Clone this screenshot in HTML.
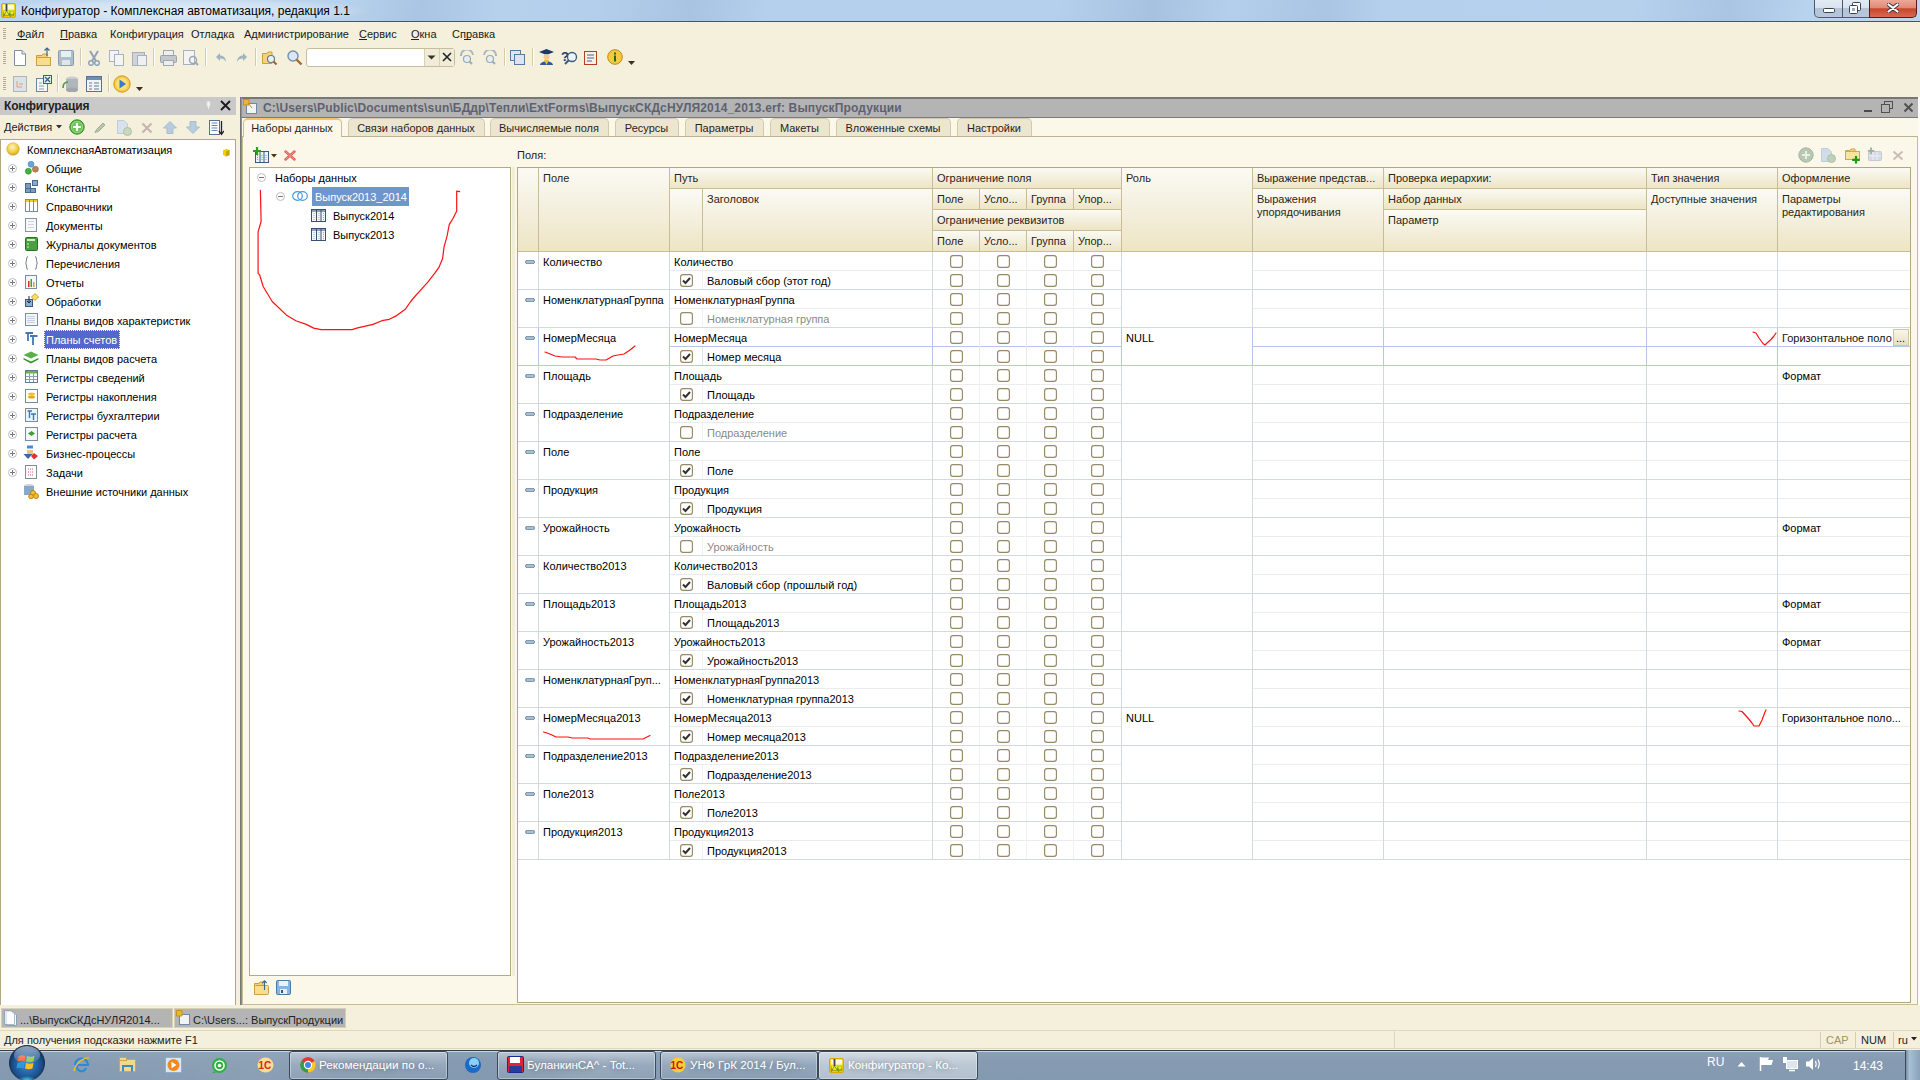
<!DOCTYPE html><html><head><meta charset="utf-8"><style>
html,body{margin:0;padding:0;width:1920px;height:1080px;overflow:hidden;background:#f4f0dc;font-family:"Liberation Sans", sans-serif;font-size:11px}
div{position:absolute;white-space:nowrap;box-sizing:border-box}
svg{position:absolute}
</style></head><body>
<div style="left:0px;top:0px;width:1920px;height:21px;background:linear-gradient(100deg,#bcd5ee 0%,#b8d2ec 18%,#a9c5e3 22%,#b6d1ec 26%,#b4cfeb 31%,#a8c4e2 36%,#b5d0ec 40%,#b4d0ec 55%,#a6c2e0 60%,#b3cfeb 64%,#a9c5e3 69%,#b4d0ec 72%,#b5d1ec 85%,#a9c5e4 90%,#b8d3ed 94%,#bcd6ee 100%)"></div>
<div style="left:0;top:0;width:380px;height:21px;background:radial-gradient(ellipse 190px 14px at 180px 11px,rgba(235,243,250,0.85),rgba(235,243,250,0.4) 70%,rgba(235,243,250,0) 100%)"></div>
<div style="left:0px;top:21px;width:1920px;height:1px;background:#4a5562"></div>
<svg style="position:absolute;left:1px;top:3px" width="15" height="15" viewBox="0 0 15 15"><defs><linearGradient id="ait" x1="0" y1="0" x2="0" y2="1"><stop offset="0" stop-color="#fffef4"/><stop offset="0.42" stop-color="#fff6c0"/><stop offset="0.55" stop-color="#c8d830"/><stop offset="1" stop-color="#5a9a10"/></linearGradient></defs><rect x="0.5" y="0.5" width="14" height="14" rx="1.5" fill="#f2c800" stroke="#dca800"/><rect x="1.8" y="1.5" width="11.4" height="11" fill="url(#ait)"/><circle cx="5.5" cy="9.5" r="2.6" fill="#fff030" opacity="0.85"/><circle cx="11" cy="10" r="1.4" fill="#fff030" opacity="0.85"/><path d="M5.5 1 V8" stroke="#40404e" stroke-width="1.8"/><path d="M5.5 8 L2 14 M5.5 8 L10 14" stroke="#607040" stroke-width="0.7"/></svg>
<div style="left:21px;top:3.84px;font-size:12px;line-height:14px;color:#000;">Конфигуратор - Комплексная автоматизация, редакция 1.1</div>
<div style="left:1814px;top:0;width:56px;height:18px;border:1px solid #4f5a66;border-top:none;border-radius:0 0 0 5px;background:linear-gradient(180deg,#e3ebf4 0%,#d9e3ee 45%,#b3c4d8 50%,#b8c8dc 100%)"></div>
<div style="left:1842px;top:0px;width:1px;height:18px;background:#4f5a66"></div>
<div style="left:1869px;top:0;width:48px;height:18px;border:1px solid #5a1c10;border-top:none;border-radius:0 0 5px 0;background:linear-gradient(180deg,#eea898 0%,#e08a78 45%,#c8452c 52%,#d86a50 100%)"></div>
<svg style="position:absolute;left:1823px;top:8px" width="12" height="5" viewBox="0 0 12 5"><rect x="0.5" y="0.5" width="11" height="4" rx="1" fill="#fff" stroke="#3a4450"/></svg>
<svg style="position:absolute;left:1849px;top:2px" width="12" height="12" viewBox="0 0 12 12"><rect x="3.5" y="0.5" width="8" height="8" rx="1" fill="#fff" stroke="#3a4450"/><rect x="0.5" y="3.5" width="8" height="8" rx="1" fill="#fff" stroke="#3a4450"/><rect x="3" y="6" width="3" height="3" fill="#9aaabb"/></svg>
<svg style="position:absolute;left:1887px;top:3px" width="12" height="10" viewBox="0 0 12 10"><path d="M1.5 1.5 L10.5 8.5 M10.5 1.5 L1.5 8.5" stroke="#3a3a3a" stroke-width="4" stroke-linecap="round"/><path d="M1.5 1.5 L10.5 8.5 M10.5 1.5 L1.5 8.5" stroke="#fff" stroke-width="2.2" stroke-linecap="round"/></svg>
<div style="left:3px;top:28px;width:3px;height:1px;background:#b4ac94"></div>
<div style="left:3px;top:30px;width:3px;height:1px;background:#b4ac94"></div>
<div style="left:3px;top:32px;width:3px;height:1px;background:#b4ac94"></div>
<div style="left:3px;top:34px;width:3px;height:1px;background:#b4ac94"></div>
<div style="left:3px;top:36px;width:3px;height:1px;background:#b4ac94"></div>
<div style="left:3px;top:38px;width:3px;height:1px;background:#b4ac94"></div>
<div style="left:17px;top:27.69px;font-size:11px;line-height:13px;color:#1a1a1a;">Файл</div>
<div style="left:60px;top:27.69px;font-size:11px;line-height:13px;color:#1a1a1a;">Правка</div>
<div style="left:110px;top:27.69px;font-size:11px;line-height:13px;color:#1a1a1a;">Конфигурация</div>
<div style="left:191px;top:27.69px;font-size:11px;line-height:13px;color:#1a1a1a;">Отладка</div>
<div style="left:244px;top:27.69px;font-size:11px;line-height:13px;color:#1a1a1a;">Администрирование</div>
<div style="left:359px;top:27.69px;font-size:11px;line-height:13px;color:#1a1a1a;">Сервис</div>
<div style="left:411px;top:27.69px;font-size:11px;line-height:13px;color:#1a1a1a;">Окна</div>
<div style="left:452px;top:27.69px;font-size:11px;line-height:13px;color:#1a1a1a;">Справка</div>
<div style="left:16px;top:39px;width:11px;height:1px;background:#222"></div>
<div style="left:60px;top:39px;width:8px;height:1px;background:#222"></div>
<div style="left:359px;top:39px;width:8px;height:1px;background:#222"></div>
<div style="left:411px;top:39px;width:8px;height:1px;background:#222"></div>
<div style="left:464px;top:39px;width:7px;height:1px;background:#222"></div>
<div style="left:3px;top:51px;width:3px;height:1px;background:#b4ac94"></div>
<div style="left:3px;top:53px;width:3px;height:1px;background:#b4ac94"></div>
<div style="left:3px;top:55px;width:3px;height:1px;background:#b4ac94"></div>
<div style="left:3px;top:57px;width:3px;height:1px;background:#b4ac94"></div>
<div style="left:3px;top:59px;width:3px;height:1px;background:#b4ac94"></div>
<div style="left:3px;top:61px;width:3px;height:1px;background:#b4ac94"></div>
<div style="left:3px;top:63px;width:3px;height:1px;background:#b4ac94"></div>
<div style="left:3px;top:77px;width:3px;height:1px;background:#b4ac94"></div>
<div style="left:3px;top:79px;width:3px;height:1px;background:#b4ac94"></div>
<div style="left:3px;top:81px;width:3px;height:1px;background:#b4ac94"></div>
<div style="left:3px;top:83px;width:3px;height:1px;background:#b4ac94"></div>
<div style="left:3px;top:85px;width:3px;height:1px;background:#b4ac94"></div>
<div style="left:3px;top:87px;width:3px;height:1px;background:#b4ac94"></div>
<div style="left:3px;top:89px;width:3px;height:1px;background:#b4ac94"></div>
<svg style="position:absolute;left:13px;top:50px" width="14" height="16" viewBox="0 0 14 16"><path d="M1.5 0.5 H9 L12.5 4 V15.5 H1.5 Z" fill="#fff" stroke="#7d8fa5"/><path d="M9 0.5 V4 H12.5" fill="#dfe8f2" stroke="#7d8fa5"/></svg>
<svg style="position:absolute;left:36px;top:50px" width="16" height="16" viewBox="0 0 16 16"><path d="M0.5 5.5 H6 L7 4 H11 V15.5 H0.5 Z" fill="#f3d27a" stroke="#c9a040"/><rect x="0.5" y="7.5" width="14" height="8" fill="#f7de8e" stroke="#c9a040"/></svg>
<svg style="position:absolute;left:44px;top:47px" width="6" height="10" viewBox="0 0 6 10"><path d="M3 9 V1 M0.5 3.5 L3 1 L5.5 3.5" stroke="#3b6a8c" stroke-width="1.2" fill="none"/></svg>
<svg style="position:absolute;left:58px;top:50px" width="16" height="16" viewBox="0 0 16 16"><rect x="0.5" y="0.5" width="15" height="15" rx="1" fill="#aebccc" stroke="#8c9cb0"/><rect x="3" y="1" width="10" height="6" fill="#e6eef6"/><rect x="4" y="10" width="8" height="5" fill="#dde6ee"/></svg>
<div style="left:80px;top:48px;width:1px;height:18px;background:#d4ccb0"></div>
<div style="left:81px;top:48px;width:1px;height:18px;background:#fff"></div>
<svg style="position:absolute;left:88px;top:50px" width="12" height="16" viewBox="0 0 12 16"><path d="M2 1 L8 11 M10 1 L4 11" stroke="#8ea2b8" stroke-width="2"/><circle cx="3" cy="13" r="2.3" fill="none" stroke="#8ea2b8" stroke-width="1.5"/><circle cx="9" cy="13" r="2.3" fill="none" stroke="#8ea2b8" stroke-width="1.5"/></svg>
<svg style="position:absolute;left:109px;top:50px" width="16" height="16" viewBox="0 0 16 16"><rect x="0.5" y="0.5" width="9" height="11" fill="#f4f4f4" stroke="#a6b2c0"/><rect x="5.5" y="4.5" width="9" height="11" fill="#f4f4f4" stroke="#a6b2c0"/></svg>
<svg style="position:absolute;left:132px;top:50px" width="16" height="16" viewBox="0 0 16 16"><rect x="0.5" y="2.5" width="12" height="13" fill="#d0d4d8" stroke="#a6aeb8"/><rect x="5.5" y="5.5" width="9" height="10" fill="#eef0f2" stroke="#a6b2c0"/></svg>
<div style="left:153px;top:48px;width:1px;height:18px;background:#d4ccb0"></div>
<div style="left:154px;top:48px;width:1px;height:18px;background:#fff"></div>
<svg style="position:absolute;left:160px;top:50px" width="17" height="16" viewBox="0 0 17 16"><rect x="3.5" y="0.5" width="10" height="5" fill="#eee" stroke="#a0a8b0"/><rect x="0.5" y="5.5" width="16" height="7" rx="1" fill="#c4c8cc" stroke="#9aa2aa"/><rect x="3.5" y="10.5" width="10" height="5" fill="#eee" stroke="#a0a8b0"/></svg>
<svg style="position:absolute;left:183px;top:50px" width="16" height="16" viewBox="0 0 16 16"><rect x="0.5" y="0.5" width="11" height="14" fill="#f4f4f4" stroke="#a6b2c0"/><circle cx="10" cy="10" r="3.5" fill="none" stroke="#9aa6b4" stroke-width="1.5"/><path d="M12.5 12.5 L15 15" stroke="#9aa6b4" stroke-width="2"/></svg>
<div style="left:205px;top:48px;width:1px;height:18px;background:#d4ccb0"></div>
<div style="left:206px;top:48px;width:1px;height:18px;background:#fff"></div>
<svg style="position:absolute;left:215px;top:52px" width="12" height="11" viewBox="0 0 12 11"><path d="M5 1 L1 5 L5 9 V6.5 C8 6.5 10 7.5 11 10 C11 6 8.5 3.5 5 3.5 Z" fill="#9fb3c2"/></svg>
<svg style="position:absolute;left:236px;top:52px" width="12" height="11" viewBox="0 0 12 11"><path d="M7 1 L11 5 L7 9 V6.5 C4 6.5 2 7.5 1 10 C1 6 3.5 3.5 7 3.5 Z" fill="#9fb3c2"/></svg>
<div style="left:255px;top:48px;width:1px;height:18px;background:#d4ccb0"></div>
<div style="left:256px;top:48px;width:1px;height:18px;background:#fff"></div>
<svg style="position:absolute;left:262px;top:50px" width="16" height="16" viewBox="0 0 16 16"><path d="M0.5 3.5 H5 L6 2 H10 V13.5 H0.5 Z" fill="#f3d27a" stroke="#c9a040"/><circle cx="9" cy="9" r="3.5" fill="#e8f0f8" stroke="#6a7a8a" stroke-width="1.2"/><path d="M11.5 11.5 L14.5 14.5" stroke="#b05a20" stroke-width="2"/></svg>
<svg style="position:absolute;left:287px;top:50px" width="16" height="16" viewBox="0 0 16 16"><circle cx="6" cy="6" r="5" fill="#d8e8f6" stroke="#7890a8" stroke-width="1.4"/><path d="M9.5 9.5 L14.5 14.5" stroke="#a86a30" stroke-width="2.4"/></svg>
<div style="left:306px;top:48px;width:149px;height:19px;border:1px solid #c7bd9c;border-radius:3px;background:#fff"></div>
<div style="left:424px;top:49px;width:1px;height:17px;background:#d8d0b4"></div>
<div style="left:425px;top:49px;width:14px;height:17px;background:#f0ecd8"></div>
<div style="left:439px;top:49px;width:1px;height:17px;background:#d8d0b4"></div>
<div style="left:440px;top:49px;width:14px;height:17px;background:#f0ecd8"></div>
<svg style="position:absolute;left:427px;top:55px" width="9" height="5" viewBox="0 0 9 5"><path d="M0.5 0.5 H8.5 L4.5 4.5 Z" fill="#3c3020"/></svg>
<svg style="position:absolute;left:442px;top:52px" width="10" height="10" viewBox="0 0 10 10"><path d="M1 1 L9 9 M9 1 L1 9" stroke="#222" stroke-width="1.6"/></svg>
<svg style="position:absolute;left:459px;top:50px" width="16" height="16" viewBox="0 0 16 16"><path d="M2 6 A6 6 0 0 1 14 5" fill="none" stroke="#aab6c2" stroke-width="2"/><circle cx="8" cy="9" r="3.5" fill="#e6eef4" stroke="#9aa8b6" stroke-width="1.2"/><path d="M10.5 11.5 L13 14" stroke="#a0aab4" stroke-width="2"/></svg>
<svg style="position:absolute;left:482px;top:50px" width="16" height="16" viewBox="0 0 16 16"><path d="M2 5 A6 6 0 0 1 14 6" fill="none" stroke="#aab6c2" stroke-width="2"/><circle cx="8" cy="9" r="3.5" fill="#e6eef4" stroke="#9aa8b6" stroke-width="1.2"/><path d="M10.5 11.5 L13 14" stroke="#a0aab4" stroke-width="2"/></svg>
<div style="left:504px;top:48px;width:1px;height:18px;background:#d4ccb0"></div>
<div style="left:505px;top:48px;width:1px;height:18px;background:#fff"></div>
<svg style="position:absolute;left:510px;top:50px" width="16" height="16" viewBox="0 0 16 16"><rect x="0.5" y="0.5" width="10" height="10" fill="#dbe6f2" stroke="#5a7a9a"/><rect x="4.5" y="4.5" width="10" height="10" fill="#dbe6f2" stroke="#5a7a9a"/></svg>
<div style="left:532px;top:48px;width:1px;height:18px;background:#d4ccb0"></div>
<div style="left:533px;top:48px;width:1px;height:18px;background:#fff"></div>
<svg style="position:absolute;left:538px;top:48px" width="17" height="18" viewBox="0 0 17 18"><path d="M1 4 L8.5 1 L16 4 L8.5 7 Z" fill="#1a3a6a"/><circle cx="8.5" cy="9" r="3" fill="#f2c89a"/><path d="M2 17 C3 12 14 12 15 17 Z" fill="#2a5a9a"/><path d="M6 12 L8.5 17 L11 12" fill="#e8c040"/></svg>
<svg style="position:absolute;left:561px;top:49px" width="17" height="17" viewBox="0 0 17 17"><text x="0" y="12" font-size="13" font-family="Liberation Sans" font-weight="bold" fill="#1a3a6a">?</text><circle cx="11" cy="8" r="4.5" fill="#eaf4fc" stroke="#3a5a7a" stroke-width="1.3"/><path d="M8 11 L4 15" stroke="#3a5a7a" stroke-width="2"/></svg>
<svg style="position:absolute;left:584px;top:50px" width="15" height="16" viewBox="0 0 15 16"><rect x="0.5" y="1.5" width="12" height="13" fill="#f8f0e0" stroke="#b04020"/><path d="M3 5 H10 M3 8 H10 M3 11 H8" stroke="#3a6aa0"/></svg>
<svg style="position:absolute;left:607px;top:49px" width="16" height="16" viewBox="0 0 16 16"><circle cx="8" cy="8" r="7.3" fill="#f5c842" stroke="#c08818"/><rect x="7" y="6.5" width="2" height="6" fill="#2a6a10"/><rect x="7" y="3.5" width="2" height="2" fill="#2a6a10"/></svg>
<svg style="position:absolute;left:628px;top:61px" width="8" height="5" viewBox="0 0 8 5"><path d="M0 0 H7 L3.5 4 Z" fill="#3c3020"/></svg>
<svg style="position:absolute;left:13px;top:76px" width="15" height="16" viewBox="0 0 15 16"><rect x="0.5" y="0.5" width="13" height="15" fill="#dde2e6" stroke="#aab4be"/><path d="M4 5 V11 H9 M6 8 H10" stroke="#d8a080" fill="none"/></svg>
<svg style="position:absolute;left:36px;top:75px" width="16" height="17" viewBox="0 0 16 17"><rect x="0.5" y="3.5" width="11" height="13" fill="#f4f6f8" stroke="#6a86a6"/><rect x="7.5" y="0.5" width="8" height="8" fill="#e8f0f8" stroke="#3a5a8a"/><path d="M9 2 L14 7 M14 2 L9 7" stroke="#3a5a8a" stroke-width="1.3"/><path d="M3 8 H6 M3 11 H8 M3 14 H8" stroke="#8aa0b8"/></svg>
<div style="left:57px;top:74px;width:1px;height:18px;background:#d4ccb0"></div>
<div style="left:58px;top:74px;width:1px;height:18px;background:#fff"></div>
<svg style="position:absolute;left:62px;top:76px" width="17" height="16" viewBox="0 0 17 16"><ellipse cx="10" cy="3" rx="6" ry="2.5" fill="#c8ccd0"/><rect x="4" y="3" width="12" height="11" fill="#b0b6bc"/><ellipse cx="10" cy="14" rx="6" ry="2.5" fill="#a0a6ac"/><path d="M1 12 C1 7 4 6 6 6" stroke="#4a9a5a" stroke-width="1.6" fill="none"/></svg>
<svg style="position:absolute;left:86px;top:76px" width="16" height="16" viewBox="0 0 16 16"><rect x="0.5" y="0.5" width="15" height="15" fill="#f0f4f8" stroke="#5a7090"/><rect x="1" y="1" width="14" height="3" fill="#7090b0"/><path d="M3 7 H6 M3 10 H6 M3 13 H6 M8 7 H13 M8 10 H13 M8 13 H13" stroke="#6a7a8a"/></svg>
<div style="left:108px;top:74px;width:1px;height:18px;background:#d4ccb0"></div>
<div style="left:109px;top:74px;width:1px;height:18px;background:#fff"></div>
<svg style="position:absolute;left:113px;top:75px" width="18" height="18" viewBox="0 0 18 18"><circle cx="9" cy="9" r="8.2" fill="#f7c94a" stroke="#d29a1a"/><circle cx="9" cy="9" r="6" fill="#fbe07a"/><path d="M6.5 4.5 L13 9 L6.5 13.5 Z" fill="#3a7ad0"/></svg>
<svg style="position:absolute;left:136px;top:87px" width="8" height="5" viewBox="0 0 8 5"><path d="M0 0 H7 L3.5 4 Z" fill="#3c3020"/></svg>
<div style="left:0px;top:97px;width:236px;height:18px;background:#c9c9c9"></div>
<div style="left:4px;top:98.84px;font-size:12px;line-height:14px;color:#222;font-weight:bold;letter-spacing:-0.15px">Конфигурация</div>
<svg style="position:absolute;left:206px;top:101px" width="6" height="9" viewBox="0 0 6 9"><rect x="1" y="0.5" width="3" height="5" rx="1" fill="#f4f4f4" stroke="#e0e0e0"/><rect x="2" y="5" width="1" height="3" fill="#eee"/></svg>
<svg style="position:absolute;left:220px;top:100px" width="11" height="11" viewBox="0 0 11 11"><path d="M1 1 L10 10 M10 1 L1 10" stroke="#1a1a1a" stroke-width="1.8"/></svg>
<div style="left:4px;top:120.69px;font-size:11px;line-height:13px;color:#1a1a1a;">Действия</div>
<svg style="position:absolute;left:56px;top:125px" width="6" height="4" viewBox="0 0 6 4"><path d="M0 0 H6 L3 3.5 Z" fill="#333"/></svg>
<svg style="position:absolute;left:69px;top:119px" width="16" height="16" viewBox="0 0 16 16"><circle cx="8" cy="8" r="7.2" fill="#5cb848" stroke="#3a8a30"/><circle cx="8" cy="8" r="5.6" fill="#6ac456" stroke="#a8e098" stroke-width="0.8"/><path d="M8 4 V12 M4 8 H12" stroke="#fff" stroke-width="2.2"/></svg>
<svg style="position:absolute;left:94px;top:121px" width="13" height="13" viewBox="0 0 13 13"><path d="M2 11 L1 12 L2.5 8.5 L9 2 L11 4 L4.5 10.5 Z" fill="#b8c6a8" stroke="#a0b090"/></svg>
<svg style="position:absolute;left:117px;top:120px" width="15" height="16" viewBox="0 0 15 16"><path d="M0.5 0.5 H7 L10.5 4 V13.5 H0.5 Z" fill="#d8e2ec" stroke="#c0ccd8"/><circle cx="10.5" cy="11.5" r="4" fill="#c8d8c0" stroke="#b0c0a8"/></svg>
<svg style="position:absolute;left:141px;top:122px" width="12" height="12" viewBox="0 0 12 12"><path d="M1.5 1.5 L10.5 10.5 M10.5 1.5 L1.5 10.5" stroke="#c8b4b0" stroke-width="2.2"/></svg>
<svg style="position:absolute;left:163px;top:121px" width="14" height="13" viewBox="0 0 14 13"><path d="M7 0.5 L13.5 7 H10 V12.5 H4 V7 H0.5 Z" fill="#b8cce0" stroke="#a8bcd0"/></svg>
<svg style="position:absolute;left:186px;top:121px" width="14" height="13" viewBox="0 0 14 13"><path d="M7 12.5 L13.5 6 H10 V0.5 H4 V6 H0.5 Z" fill="#b8cce0" stroke="#a8bcd0"/></svg>
<svg style="position:absolute;left:209px;top:120px" width="15" height="16" viewBox="0 0 15 16"><rect x="0.5" y="0.5" width="10" height="14" fill="#fff" stroke="#5a7090"/><path d="M2.5 3 H8.5 M2.5 5.5 H8.5 M2.5 8 H8.5 M2.5 10.5 H8.5" stroke="#6a8ab0"/><path d="M12.5 1 V13 M10 11 L12.5 14.5 L15 11" stroke="#1a2a3a" stroke-width="1.3" fill="none"/></svg>
<div style="left:0;top:139px;width:236px;height:868px;background:#fff;border:1px solid #b2a880;border-left-color:#b2a880"></div>
<svg style="position:absolute;left:6px;top:142px" width="14" height="14" viewBox="0 0 14 14"><defs><radialGradient id="gy" cx="0.45" cy="0.35" r="0.7"><stop offset="0" stop-color="#fff6c0"/><stop offset="0.6" stop-color="#f0cc40"/><stop offset="1" stop-color="#c89a18"/></radialGradient></defs><circle cx="7" cy="7" r="6.3" fill="url(#gy)" stroke="#d8b040" stroke-width="0.6"/></svg>
<div style="left:27px;top:143.69px;font-size:11px;line-height:13px;color:#000;">КомплекснаяАвтоматизация</div>
<svg style="position:absolute;left:222px;top:148px" width="8" height="9" viewBox="0 0 8 9"><path d="M1 2.5 L4.5 0.8 L7.5 2 V7 L4 8.5 L1 7 Z" fill="#f0d000"/><path d="M4 3.5 V8.5 L7.5 7 V2 Z" fill="#c8a800"/></svg>
<svg style="position:absolute;left:8.0px;top:163.5px" width="9" height="9" viewBox="0 0 9 9"><circle cx="4.5" cy="4.5" r="4" fill="#fff" stroke="#b4b4b4" stroke-width="0.9"/><path d="M2 4.5 H7 M4.5 2 V7" stroke="#777" stroke-width="1"/></svg>
<svg style="position:absolute;left:25px;top:161px" width="14" height="14" viewBox="0 0 14 14"><circle cx="6" cy="3.2" r="3" fill="#6aa6d8" stroke="#4a86b8" stroke-width="0.6"/><circle cx="3.4" cy="10.2" r="3" fill="#44b040" stroke="#2a9020" stroke-width="0.6"/><circle cx="10.4" cy="8.2" r="3" fill="#b8845a" stroke="#986440" stroke-width="0.6"/></svg>
<div style="left:46px;top:162.69px;font-size:11px;line-height:13px;color:#000;">Общие</div>
<svg style="position:absolute;left:8.0px;top:182.5px" width="9" height="9" viewBox="0 0 9 9"><circle cx="4.5" cy="4.5" r="4" fill="#fff" stroke="#b4b4b4" stroke-width="0.9"/><path d="M2 4.5 H7 M4.5 2 V7" stroke="#777" stroke-width="1"/></svg>
<svg style="position:absolute;left:25px;top:180px" width="13" height="13" viewBox="0 0 13 13"><rect x="0.5" y="3.5" width="5" height="5" fill="#7a9cc0" stroke="#4a6a8a"/><rect x="7.5" y="0.5" width="5" height="5" fill="#8aaccc" stroke="#4a6a8a"/><rect x="0.5" y="8.5" width="5" height="4" fill="#7a9cc0" stroke="#4a6a8a"/><rect x="5.5" y="8.5" width="5" height="4" fill="#7a9cc0" stroke="#4a6a8a"/></svg>
<div style="left:46px;top:181.69px;font-size:11px;line-height:13px;color:#000;">Константы</div>
<svg style="position:absolute;left:8.0px;top:201.5px" width="9" height="9" viewBox="0 0 9 9"><circle cx="4.5" cy="4.5" r="4" fill="#fff" stroke="#b4b4b4" stroke-width="0.9"/><path d="M2 4.5 H7 M4.5 2 V7" stroke="#777" stroke-width="1"/></svg>
<svg style="position:absolute;left:25px;top:199px" width="13" height="13" viewBox="0 0 13 13"><rect x="0.5" y="0.5" width="12" height="12" fill="#fff" stroke="#7a8ca0"/><rect x="1" y="1" width="11" height="2" fill="#f0d020"/><path d="M4.5 1 V12 M8.5 1 V12" stroke="#7a8ca0"/></svg>
<div style="left:46px;top:200.69px;font-size:11px;line-height:13px;color:#000;">Справочники</div>
<svg style="position:absolute;left:8.0px;top:220.5px" width="9" height="9" viewBox="0 0 9 9"><circle cx="4.5" cy="4.5" r="4" fill="#fff" stroke="#b4b4b4" stroke-width="0.9"/><path d="M2 4.5 H7 M4.5 2 V7" stroke="#777" stroke-width="1"/></svg>
<svg style="position:absolute;left:25px;top:218px" width="13" height="14" viewBox="0 0 13 14"><rect x="0.5" y="0.5" width="11" height="13" fill="#f6f8fb" stroke="#8096ac"/><path d="M3 3.5 H9 M3 6.5 H9 M3 9.5 H9" stroke="#c4ced8" stroke-width="0.8"/></svg>
<div style="left:46px;top:219.69px;font-size:11px;line-height:13px;color:#000;">Документы</div>
<svg style="position:absolute;left:8.0px;top:239.5px" width="9" height="9" viewBox="0 0 9 9"><circle cx="4.5" cy="4.5" r="4" fill="#fff" stroke="#b4b4b4" stroke-width="0.9"/><path d="M2 4.5 H7 M4.5 2 V7" stroke="#777" stroke-width="1"/></svg>
<svg style="position:absolute;left:25px;top:237px" width="13" height="14" viewBox="0 0 13 14"><rect x="0.5" y="0.5" width="12" height="13" rx="1" fill="#4aa040" stroke="#2a7020"/><rect x="2" y="2" width="8" height="2" fill="#c8f0b8"/><path d="M2 7 H4 M2 10 H4" stroke="#d0f0c0"/></svg>
<div style="left:46px;top:238.69px;font-size:11px;line-height:13px;color:#000;">Журналы документов</div>
<svg style="position:absolute;left:8.0px;top:258.5px" width="9" height="9" viewBox="0 0 9 9"><circle cx="4.5" cy="4.5" r="4" fill="#fff" stroke="#b4b4b4" stroke-width="0.9"/><path d="M2 4.5 H7 M4.5 2 V7" stroke="#777" stroke-width="1"/></svg>
<svg style="position:absolute;left:25px;top:256px" width="13" height="14" viewBox="0 0 13 14"><path d="M3 0.5 C1 0.5 2 6 0.5 7 C2 8 1 13.5 3 13.5 M10 0.5 C12 0.5 11 6 12.5 7 C11 8 12 13.5 10 13.5" stroke="#5a6a7a" fill="none"/></svg>
<div style="left:46px;top:257.69px;font-size:11px;line-height:13px;color:#000;">Перечисления</div>
<svg style="position:absolute;left:8.0px;top:277.5px" width="9" height="9" viewBox="0 0 9 9"><circle cx="4.5" cy="4.5" r="4" fill="#fff" stroke="#b4b4b4" stroke-width="0.9"/><path d="M2 4.5 H7 M4.5 2 V7" stroke="#777" stroke-width="1"/></svg>
<svg style="position:absolute;left:25px;top:275px" width="13" height="14" viewBox="0 0 13 14"><rect x="0.5" y="0.5" width="11" height="13" fill="#f4f6fa" stroke="#7a8ca0"/><rect x="3" y="6" width="1.5" height="6" fill="#d83020"/><rect x="5.5" y="4" width="1.5" height="8" fill="#40a030"/><rect x="8" y="7" width="1.5" height="5" fill="#e0a020"/></svg>
<div style="left:46px;top:276.69px;font-size:11px;line-height:13px;color:#000;">Отчеты</div>
<svg style="position:absolute;left:8.0px;top:296.5px" width="9" height="9" viewBox="0 0 9 9"><circle cx="4.5" cy="4.5" r="4" fill="#fff" stroke="#b4b4b4" stroke-width="0.9"/><path d="M2 4.5 H7 M4.5 2 V7" stroke="#777" stroke-width="1"/></svg>
<svg style="position:absolute;left:25px;top:293px" width="14" height="15" viewBox="0 0 14 15"><rect x="0.5" y="6.5" width="7" height="7" fill="#8ab0d8" stroke="#3a5a7a"/><path d="M4 3 V10 M2 8 L4 10 L6 8" stroke="#1a2a3a" fill="none"/><path d="M10 0.5 L13.5 4 L10 7.5 L6.5 4 Z" fill="#f8e060" stroke="#d0a020"/></svg>
<div style="left:46px;top:295.69px;font-size:11px;line-height:13px;color:#000;">Обработки</div>
<svg style="position:absolute;left:8.0px;top:315.5px" width="9" height="9" viewBox="0 0 9 9"><circle cx="4.5" cy="4.5" r="4" fill="#fff" stroke="#b4b4b4" stroke-width="0.9"/><path d="M2 4.5 H7 M4.5 2 V7" stroke="#777" stroke-width="1"/></svg>
<svg style="position:absolute;left:25px;top:313px" width="13" height="13" viewBox="0 0 13 13"><rect x="0.5" y="0.5" width="12" height="12" fill="#f4f6fa" stroke="#7a8ca0"/><path d="M3 3 V11 M5 3 V11 M7 3 V11 M9 3 V11" stroke="#9aacbe" stroke-dasharray="1 1"/></svg>
<div style="left:46px;top:314.69px;font-size:11px;line-height:13px;color:#000;">Планы видов характеристик</div>
<svg style="position:absolute;left:8.0px;top:334.5px" width="9" height="9" viewBox="0 0 9 9"><circle cx="4.5" cy="4.5" r="4" fill="#fff" stroke="#b4b4b4" stroke-width="0.9"/><path d="M2 4.5 H7 M4.5 2 V7" stroke="#777" stroke-width="1"/></svg>
<svg style="position:absolute;left:25px;top:332px" width="13" height="14" viewBox="0 0 13 14"><path d="M0.5 1 H8 M3 1 V9 M5 4 H12.5 M8 4 V13" stroke="#3a7ab8" stroke-width="1.8"/></svg>
<div style="left:44px;top:330px;width:76px;height:19px;background:#5468c6;outline:1px dotted #f0f2ff;outline-offset:-1px"></div>
<div style="left:46px;top:333.69px;font-size:11px;line-height:13px;color:#fff;">Планы счетов</div>
<svg style="position:absolute;left:8.0px;top:353.5px" width="9" height="9" viewBox="0 0 9 9"><circle cx="4.5" cy="4.5" r="4" fill="#fff" stroke="#b4b4b4" stroke-width="0.9"/><path d="M2 4.5 H7 M4.5 2 V7" stroke="#777" stroke-width="1"/></svg>
<svg style="position:absolute;left:23px;top:351px" width="16" height="13" viewBox="0 0 16 13"><path d="M8 0.5 L15.5 4 L8 7.5 L0.5 4 Z" fill="#58b048"/><path d="M0.5 7 L8 10.5 L15.5 7 L15.5 8.5 L8 12.5 L0.5 8.5 Z" fill="#3a9030"/></svg>
<div style="left:46px;top:352.69px;font-size:11px;line-height:13px;color:#000;">Планы видов расчета</div>
<svg style="position:absolute;left:8.0px;top:372.5px" width="9" height="9" viewBox="0 0 9 9"><circle cx="4.5" cy="4.5" r="4" fill="#fff" stroke="#b4b4b4" stroke-width="0.9"/><path d="M2 4.5 H7 M4.5 2 V7" stroke="#777" stroke-width="1"/></svg>
<svg style="position:absolute;left:25px;top:370px" width="13" height="13" viewBox="0 0 13 13"><rect x="0.5" y="0.5" width="12" height="12" fill="#fff" stroke="#5a7a9a"/><rect x="1" y="1" width="11" height="2.5" fill="#68b048"/><path d="M4.5 1 V12 M8.5 1 V12 M1 6.5 H12 M1 9.5 H12" stroke="#8aa0b8"/></svg>
<div style="left:46px;top:371.69px;font-size:11px;line-height:13px;color:#000;">Регистры сведений</div>
<svg style="position:absolute;left:8.0px;top:391.5px" width="9" height="9" viewBox="0 0 9 9"><circle cx="4.5" cy="4.5" r="4" fill="#fff" stroke="#b4b4b4" stroke-width="0.9"/><path d="M2 4.5 H7 M4.5 2 V7" stroke="#777" stroke-width="1"/></svg>
<svg style="position:absolute;left:25px;top:389px" width="13" height="14" viewBox="0 0 13 14"><rect x="0.5" y="0.5" width="12" height="13" fill="#fff" stroke="#7a8ca0"/><ellipse cx="6.5" cy="5" rx="3.5" ry="1.6" fill="#f0c030"/><ellipse cx="6.5" cy="8" rx="3.5" ry="1.6" fill="#e0a820"/></svg>
<div style="left:46px;top:390.69px;font-size:11px;line-height:13px;color:#000;">Регистры накопления</div>
<svg style="position:absolute;left:8.0px;top:410.5px" width="9" height="9" viewBox="0 0 9 9"><circle cx="4.5" cy="4.5" r="4" fill="#fff" stroke="#b4b4b4" stroke-width="0.9"/><path d="M2 4.5 H7 M4.5 2 V7" stroke="#777" stroke-width="1"/></svg>
<svg style="position:absolute;left:25px;top:408px" width="13" height="14" viewBox="0 0 13 14"><rect x="0.5" y="0.5" width="12" height="13" fill="#eaf2fa" stroke="#7a8ca0"/><path d="M2.5 3 H7 M4.5 3 V10 M6 6 H11 M8.5 6 V12" stroke="#3a7ab8" stroke-width="1.4"/></svg>
<div style="left:46px;top:409.69px;font-size:11px;line-height:13px;color:#000;">Регистры бухгалтерии</div>
<svg style="position:absolute;left:8.0px;top:429.5px" width="9" height="9" viewBox="0 0 9 9"><circle cx="4.5" cy="4.5" r="4" fill="#fff" stroke="#b4b4b4" stroke-width="0.9"/><path d="M2 4.5 H7 M4.5 2 V7" stroke="#777" stroke-width="1"/></svg>
<svg style="position:absolute;left:25px;top:427px" width="13" height="14" viewBox="0 0 13 14"><rect x="0.5" y="0.5" width="12" height="13" fill="#f4f6fa" stroke="#7a8ca0"/><path d="M6.5 4 L10 6.5 L6.5 9 L3 6.5 Z" fill="#40a030"/></svg>
<div style="left:46px;top:428.69px;font-size:11px;line-height:13px;color:#000;">Регистры расчета</div>
<svg style="position:absolute;left:8.0px;top:448.5px" width="9" height="9" viewBox="0 0 9 9"><circle cx="4.5" cy="4.5" r="4" fill="#fff" stroke="#b4b4b4" stroke-width="0.9"/><path d="M2 4.5 H7 M4.5 2 V7" stroke="#777" stroke-width="1"/></svg>
<svg style="position:absolute;left:23px;top:445px" width="16" height="15" viewBox="0 0 16 15"><rect x="4" y="0.5" width="6" height="3" fill="#4a8ad0"/><rect x="4" y="5" width="6" height="4" fill="#f0c080"/><path d="M0.5 9 L5 14 L9.5 9 Z" fill="#3a6aa0"/><path d="M11 8 L15 11 L11 14.5 L8 11 Z" fill="#e03030"/></svg>
<div style="left:46px;top:447.69px;font-size:11px;line-height:13px;color:#000;">Бизнес-процессы</div>
<svg style="position:absolute;left:8.0px;top:467.5px" width="9" height="9" viewBox="0 0 9 9"><circle cx="4.5" cy="4.5" r="4" fill="#fff" stroke="#b4b4b4" stroke-width="0.9"/><path d="M2 4.5 H7 M4.5 2 V7" stroke="#777" stroke-width="1"/></svg>
<svg style="position:absolute;left:25px;top:465px" width="13" height="14" viewBox="0 0 13 14"><rect x="0.5" y="0.5" width="11" height="13" fill="#fff" stroke="#7a8ca0"/><path d="M3 4 H9 M3 7 H9 M3 10 H9" stroke="#d06060" stroke-dasharray="1 1"/></svg>
<div style="left:46px;top:466.69px;font-size:11px;line-height:13px;color:#000;">Задачи</div>
<svg style="position:absolute;left:23px;top:483px" width="16" height="16" viewBox="0 0 16 16"><ellipse cx="6" cy="3" rx="5" ry="2" fill="#c8d4e0"/><rect x="1" y="3" width="10" height="9" fill="#8aa8c8"/><circle cx="10" cy="10" r="2.5" fill="#f0c030" stroke="#c08810"/><circle cx="13" cy="13" r="2.5" fill="#f0c030" stroke="#c08810"/><circle cx="8" cy="13.5" r="2.3" fill="#f0c030" stroke="#c08810"/></svg>
<div style="left:46px;top:485.69px;font-size:11px;line-height:13px;color:#000;">Внешние источники данных</div>
<div style="left:240px;top:97px;width:1678px;height:908px;background:#777"></div>
<div style="left:242px;top:99px;width:1676px;height:18px;background:#b4b4b4"></div>
<div style="left:240px;top:117px;width:1678px;height:1px;background:#7a7a7a"></div>
<div style="left:242px;top:118px;width:1676px;height:887px;background:#fbf8ea"></div>
<div style="left:240px;top:97px;width:2px;height:908px;background:linear-gradient(90deg,#6a6a6a,#9a9a9a)"></div>
<div style="left:1918px;top:97px;width:2px;height:908px;background:#fdfdf8"></div>
<svg style="position:absolute;left:243px;top:99px" width="15" height="15" viewBox="0 0 15 15"><rect x="3.5" y="4.5" width="10" height="10" fill="#f0f4f8" stroke="#6a8aaa"/><path d="M0.5 0.5 H6 V6 H0.5 Z" fill="#e8b830" stroke="#c89020"/><path d="M5 4 L9 9" stroke="#c89020"/></svg>
<div style="left:263px;top:100.84px;font-size:12px;line-height:14px;color:#5e6270;font-weight:bold;letter-spacing:0.15px">C:\Users\Public\Documents\sun\БДдр\Тепли\ExtForms\ВыпускСКДсНУЛЯ2014_2013.erf: ВыпускПродукции</div>
<svg style="position:absolute;left:1864px;top:107px" width="9" height="6" viewBox="0 0 9 6"><rect x="0" y="3" width="8" height="2" fill="#4a4a4a"/></svg>
<svg style="position:absolute;left:1881px;top:101px" width="12" height="12" viewBox="0 0 12 12"><rect x="3.5" y="0.5" width="8" height="7" fill="none" stroke="#505050"/><rect x="0.5" y="3.5" width="8" height="8" fill="#b4b4b4" stroke="#505050"/></svg>
<svg style="position:absolute;left:1903px;top:102px" width="11" height="11" viewBox="0 0 11 11"><path d="M1.5 1.5 L9.5 9.5 M9.5 1.5 L1.5 9.5" stroke="#505050" stroke-width="2"/></svg>
<div style="left:242px;top:136px;width:1676px;height:869px;border:1px solid #c8bc94;border-top-color:#bab290;background:#fbf8ea"></div>
<div style="left:242px;top:118px;width:1676px;height:18px;background:#fbf8ea"></div>
<div style="left:243px;top:118px;width:99px;height:19px;background:#fbf8ea;border:1px solid #c8bc94;border-bottom:none;border-top:2px solid #f6c26a;border-radius:5px 5px 0 0"></div>
<div style="left:243px;top:121.7px;width:98px;text-align:center;font-size:11px;line-height:13px;color:#2a2418">Наборы данных</div>
<div style="left:348px;top:118px;width:137px;height:18px;background:#ece6d0;border:1px solid #d2caa8;border-bottom:none;border-radius:5px 5px 0 0"></div>
<div style="left:348px;top:121.7px;width:136px;text-align:center;font-size:11px;line-height:13px;color:#2a2418">Связи наборов данных</div>
<div style="left:490px;top:118px;width:119px;height:18px;background:#ece6d0;border:1px solid #d2caa8;border-bottom:none;border-radius:5px 5px 0 0"></div>
<div style="left:490px;top:121.7px;width:118px;text-align:center;font-size:11px;line-height:13px;color:#2a2418">Вычисляемые поля</div>
<div style="left:615px;top:118px;width:64px;height:18px;background:#ece6d0;border:1px solid #d2caa8;border-bottom:none;border-radius:5px 5px 0 0"></div>
<div style="left:615px;top:121.7px;width:63px;text-align:center;font-size:11px;line-height:13px;color:#2a2418">Ресурсы</div>
<div style="left:685px;top:118px;width:79px;height:18px;background:#ece6d0;border:1px solid #d2caa8;border-bottom:none;border-radius:5px 5px 0 0"></div>
<div style="left:685px;top:121.7px;width:78px;text-align:center;font-size:11px;line-height:13px;color:#2a2418">Параметры</div>
<div style="left:770px;top:118px;width:60px;height:18px;background:#ece6d0;border:1px solid #d2caa8;border-bottom:none;border-radius:5px 5px 0 0"></div>
<div style="left:770px;top:121.7px;width:59px;text-align:center;font-size:11px;line-height:13px;color:#2a2418">Макеты</div>
<div style="left:836px;top:118px;width:115px;height:18px;background:#ece6d0;border:1px solid #d2caa8;border-bottom:none;border-radius:5px 5px 0 0"></div>
<div style="left:836px;top:121.7px;width:114px;text-align:center;font-size:11px;line-height:13px;color:#2a2418">Вложенные схемы</div>
<div style="left:957px;top:118px;width:75px;height:18px;background:#ece6d0;border:1px solid #d2caa8;border-bottom:none;border-radius:5px 5px 0 0"></div>
<div style="left:957px;top:121.7px;width:74px;text-align:center;font-size:11px;line-height:13px;color:#2a2418">Настройки</div>
<svg style="position:absolute;left:253px;top:147px" width="17" height="16" viewBox="0 0 17 16"><rect x="2.5" y="4.5" width="13" height="11" fill="#eef2f8" stroke="#3a5a80"/><path d="M7 5 V15 M11 5 V15" stroke="#3a5a80"/><path d="M4.5 8 V14 M9 8 V14 M13 8 V14" stroke="#8aa0c0" stroke-dasharray="1 1"/><path d="M4 0 V8 M0 4 H8" stroke="#2aa020" stroke-width="2.2"/></svg>
<svg style="position:absolute;left:271px;top:154px" width="6" height="4" viewBox="0 0 6 4"><path d="M0 0 H6 L3 3.5 Z" fill="#4a3a10"/></svg>
<svg style="position:absolute;left:284px;top:150px" width="12" height="11" viewBox="0 0 12 11"><path d="M1.5 1.5 L10.5 9.5 M10.5 1.5 L1.5 9.5" stroke="#e05a50" stroke-width="2.4" stroke-linecap="round"/><path d="M1.5 1.5 L10.5 9.5 M10.5 1.5 L1.5 9.5" stroke="#f4a8a0" stroke-width="0.8"/></svg>
<div style="left:249px;top:167px;width:262px;height:809px;background:#fff;border:1px solid #b5aa82"></div>
<div style="left:512px;top:167px;width:3px;height:809px;background:#f1eddb"></div>
<svg style="position:absolute;left:257.0px;top:173.0px" width="9" height="9" viewBox="0 0 9 9"><circle cx="4.5" cy="4.5" r="4" fill="#fff" stroke="#b4b4b4" stroke-width="0.9"/><path d="M2 4.5 H7" stroke="#777" stroke-width="1"/></svg>
<div style="left:275px;top:171.69px;font-size:11px;line-height:13px;color:#000;">Наборы данных</div>
<svg style="position:absolute;left:276.0px;top:192.0px" width="9" height="9" viewBox="0 0 9 9"><circle cx="4.5" cy="4.5" r="4" fill="#fff" stroke="#b4b4b4" stroke-width="0.9"/><path d="M2 4.5 H7" stroke="#777" stroke-width="1"/></svg>
<svg style="position:absolute;left:292px;top:191px" width="16" height="10" viewBox="0 0 16 10"><ellipse cx="5.5" cy="5" rx="4.8" ry="4.3" fill="none" stroke="#4a9ad8" stroke-width="1.2"/><ellipse cx="10.5" cy="5" rx="4.8" ry="4.3" fill="none" stroke="#4a9ad8" stroke-width="1.2"/></svg>
<div style="left:312px;top:187px;width:97px;height:19px;background:#6f96cc"></div>
<div style="left:315px;top:190.69px;font-size:11px;line-height:13px;color:#fff;">Выпуск2013_2014</div>
<svg style="position:absolute;left:311px;top:209px" width="15" height="13" viewBox="0 0 15 13"><rect x="0.5" y="0.5" width="14" height="12" fill="#f4f6fa" stroke="#3a5070"/><rect x="1" y="1" width="13" height="2" fill="#8aa0c0"/><path d="M5.5 1 V12 M10 1 V12" stroke="#3a5070"/><path d="M3 4 V12 M8 4 V12 M12.5 4 V12" stroke="#9ab0c8" stroke-dasharray="1 1"/></svg>
<div style="left:333px;top:209.69px;font-size:11px;line-height:13px;color:#000;">Выпуск2014</div>
<svg style="position:absolute;left:311px;top:228px" width="15" height="13" viewBox="0 0 15 13"><rect x="0.5" y="0.5" width="14" height="12" fill="#f4f6fa" stroke="#3a5070"/><rect x="1" y="1" width="13" height="2" fill="#8aa0c0"/><path d="M5.5 1 V12 M10 1 V12" stroke="#3a5070"/><path d="M3 4 V12 M8 4 V12 M12.5 4 V12" stroke="#9ab0c8" stroke-dasharray="1 1"/></svg>
<div style="left:333px;top:228.69px;font-size:11px;line-height:13px;color:#000;">Выпуск2013</div>
<svg style="position:absolute;left:254px;top:980px" width="15" height="15" viewBox="0 0 15 15"><path d="M0.5 3.5 H5 L6 2 H9 V14.5 H0.5 Z" fill="#f3d27a" stroke="#c9a040"/><rect x="0.5" y="5.5" width="14" height="9" rx="1" fill="#f7de8e" stroke="#c9a040"/><path d="M10.5 10 V0.8 M8.3 3 L10.5 0.8 L12.7 3" stroke="#3b6a8c" stroke-width="1.1" fill="none"/></svg>
<svg style="position:absolute;left:276px;top:980px" width="16" height="16" viewBox="0 0 16 16"><rect x="0.5" y="0.5" width="14" height="14" rx="1" fill="#8ab4dc" stroke="#4a78a8"/><rect x="3" y="1" width="9" height="5" fill="#e8f2fa"/><rect x="4" y="9" width="7" height="5" fill="#e8eef4"/><rect x="5" y="10" width="2" height="3" fill="#3a5a7a"/></svg>
<div style="left:517px;top:148.69px;font-size:11px;line-height:13px;color:#222;">Поля:</div>
<svg style="position:absolute;left:1798px;top:147px" width="16" height="16" viewBox="0 0 16 16"><circle cx="8" cy="8" r="7.2" fill="#b8c8b0" stroke="#a8b8a0"/><path d="M8 4 V12 M4 8 H12" stroke="#e8f0e4" stroke-width="2"/></svg>
<svg style="position:absolute;left:1821px;top:148px" width="16" height="15" viewBox="0 0 16 15"><path d="M0.5 0.5 H7 L10.5 4 V13.5 H0.5 Z" fill="#d0dcea" stroke="#c0ccd8"/><circle cx="10.5" cy="10.5" r="4" fill="#c0d0b8" stroke="#b0c0a8"/></svg>
<svg style="position:absolute;left:1845px;top:148px" width="16" height="16" viewBox="0 0 16 16"><path d="M0.5 2.5 H5 L6 1 H10 V11.5 H0.5 Z" fill="#f3d27a" stroke="#d0a848"/><rect x="0.5" y="3.5" width="14" height="8" fill="#f8e6a0" stroke="#d0a848"/><path d="M11 8 V15.5 M7.2 11.8 H14.8" stroke="#1a9a10" stroke-width="2.2"/></svg>
<svg style="position:absolute;left:1867px;top:147px" width="16" height="16" viewBox="0 0 16 16"><rect x="1.5" y="4.5" width="13" height="9" rx="1" fill="#d4dae0" stroke="#c4cad0"/><path d="M6 5 V13 M10 5 V13 M2 9 H14" stroke="#eef"/><path d="M4 0.5 V7 M0.8 3.8 H7.2" stroke="#a0b0a0" stroke-width="1.8"/></svg>
<svg style="position:absolute;left:1892px;top:150px" width="12" height="11" viewBox="0 0 12 11"><path d="M1.5 1.5 L10.5 9.5 M10.5 1.5 L1.5 9.5" stroke="#cbbcb8" stroke-width="2"/></svg>
<div style="left:517px;top:167px;width:1394px;height:836px;background:#fff;border:1px solid #b2a67e"></div>
<div style="left:517px;top:168px;width:21px;height:84px;background:linear-gradient(180deg,#fbfaf3 0%,#f3eedb 55%,#eee5c4 100%);border-left:1px solid #c9bd98;border-bottom:1px solid #c9bd98"></div>
<div style="left:538px;top:168px;width:131px;height:84px;background:linear-gradient(180deg,#fbfaf3 0%,#f3eedb 55%,#eee5c4 100%);border-left:1px solid #c9bd98;border-bottom:1px solid #c9bd98"></div>
<div style="left:543px;top:171.69px;font-size:11px;line-height:13px;color:#2a2418;">Поле</div>
<div style="left:669px;top:168px;width:263px;height:21px;background:linear-gradient(180deg,#fbfaf3 0%,#f3eedb 55%,#eee5c4 100%);border-left:1px solid #c9bd98;border-bottom:1px solid #c9bd98"></div>
<div style="left:674px;top:171.69px;font-size:11px;line-height:13px;color:#2a2418;">Путь</div>
<div style="left:669px;top:189px;width:33px;height:63px;background:linear-gradient(180deg,#fbfaf3 0%,#f3eedb 55%,#eee5c4 100%);border-left:1px solid #c9bd98;border-bottom:1px solid #c9bd98"></div>
<div style="left:702px;top:189px;width:230px;height:63px;background:linear-gradient(180deg,#fbfaf3 0%,#f3eedb 55%,#eee5c4 100%);border-left:1px solid #c9bd98;border-bottom:1px solid #c9bd98"></div>
<div style="left:707px;top:192.69px;font-size:11px;line-height:13px;color:#2a2418;">Заголовок</div>
<div style="left:932px;top:168px;width:189px;height:21px;background:linear-gradient(180deg,#fbfaf3 0%,#f3eedb 55%,#eee5c4 100%);border-left:1px solid #c9bd98;border-bottom:1px solid #c9bd98"></div>
<div style="left:937px;top:171.69px;font-size:11px;line-height:13px;color:#2a2418;">Ограничение поля</div>
<div style="left:932px;top:189px;width:47px;height:21px;background:linear-gradient(180deg,#fbfaf3 0%,#f3eedb 55%,#eee5c4 100%);border-left:1px solid #c9bd98;border-bottom:1px solid #c9bd98"></div>
<div style="left:937px;top:192.69px;font-size:11px;line-height:13px;color:#2a2418;">Поле</div>
<div style="left:932px;top:231px;width:47px;height:21px;background:linear-gradient(180deg,#fbfaf3 0%,#f3eedb 55%,#eee5c4 100%);border-left:1px solid #c9bd98;border-bottom:1px solid #c9bd98"></div>
<div style="left:937px;top:234.69px;font-size:11px;line-height:13px;color:#2a2418;">Поле</div>
<div style="left:979px;top:189px;width:47px;height:21px;background:linear-gradient(180deg,#fbfaf3 0%,#f3eedb 55%,#eee5c4 100%);border-left:1px solid #c9bd98;border-bottom:1px solid #c9bd98"></div>
<div style="left:984px;top:192.69px;font-size:11px;line-height:13px;color:#2a2418;">Усло...</div>
<div style="left:979px;top:231px;width:47px;height:21px;background:linear-gradient(180deg,#fbfaf3 0%,#f3eedb 55%,#eee5c4 100%);border-left:1px solid #c9bd98;border-bottom:1px solid #c9bd98"></div>
<div style="left:984px;top:234.69px;font-size:11px;line-height:13px;color:#2a2418;">Усло...</div>
<div style="left:1026px;top:189px;width:47px;height:21px;background:linear-gradient(180deg,#fbfaf3 0%,#f3eedb 55%,#eee5c4 100%);border-left:1px solid #c9bd98;border-bottom:1px solid #c9bd98"></div>
<div style="left:1031px;top:192.69px;font-size:11px;line-height:13px;color:#2a2418;">Группа</div>
<div style="left:1026px;top:231px;width:47px;height:21px;background:linear-gradient(180deg,#fbfaf3 0%,#f3eedb 55%,#eee5c4 100%);border-left:1px solid #c9bd98;border-bottom:1px solid #c9bd98"></div>
<div style="left:1031px;top:234.69px;font-size:11px;line-height:13px;color:#2a2418;">Группа</div>
<div style="left:1073px;top:189px;width:48px;height:21px;background:linear-gradient(180deg,#fbfaf3 0%,#f3eedb 55%,#eee5c4 100%);border-left:1px solid #c9bd98;border-bottom:1px solid #c9bd98"></div>
<div style="left:1078px;top:192.69px;font-size:11px;line-height:13px;color:#2a2418;">Упор...</div>
<div style="left:1073px;top:231px;width:48px;height:21px;background:linear-gradient(180deg,#fbfaf3 0%,#f3eedb 55%,#eee5c4 100%);border-left:1px solid #c9bd98;border-bottom:1px solid #c9bd98"></div>
<div style="left:1078px;top:234.69px;font-size:11px;line-height:13px;color:#2a2418;">Упор...</div>
<div style="left:932px;top:210px;width:189px;height:21px;background:linear-gradient(180deg,#fbfaf3 0%,#f3eedb 55%,#eee5c4 100%);border-left:1px solid #c9bd98;border-bottom:1px solid #c9bd98"></div>
<div style="left:937px;top:213.69px;font-size:11px;line-height:13px;color:#2a2418;">Ограничение реквизитов</div>
<div style="left:1121px;top:168px;width:131px;height:84px;background:linear-gradient(180deg,#fbfaf3 0%,#f3eedb 55%,#eee5c4 100%);border-left:1px solid #c9bd98;border-bottom:1px solid #c9bd98"></div>
<div style="left:1126px;top:171.69px;font-size:11px;line-height:13px;color:#2a2418;">Роль</div>
<div style="left:1252px;top:168px;width:131px;height:21px;background:linear-gradient(180deg,#fbfaf3 0%,#f3eedb 55%,#eee5c4 100%);border-left:1px solid #c9bd98;border-bottom:1px solid #c9bd98"></div>
<div style="left:1257px;top:171.69px;font-size:11px;line-height:13px;color:#2a2418;">Выражение представ...</div>
<div style="left:1252px;top:189px;width:131px;height:63px;background:linear-gradient(180deg,#fbfaf3 0%,#f3eedb 55%,#eee5c4 100%);border-left:1px solid #c9bd98;border-bottom:1px solid #c9bd98"></div>
<div style="left:1257px;top:192.69px;font-size:11px;line-height:13px;color:#2a2418;">Выражения</div>
<div style="left:1257px;top:205.69px;font-size:11px;line-height:13px;color:#2a2418;">упорядочивания</div>
<div style="left:1383px;top:168px;width:263px;height:21px;background:linear-gradient(180deg,#fbfaf3 0%,#f3eedb 55%,#eee5c4 100%);border-left:1px solid #c9bd98;border-bottom:1px solid #c9bd98"></div>
<div style="left:1388px;top:171.69px;font-size:11px;line-height:13px;color:#2a2418;">Проверка иерархии:</div>
<div style="left:1383px;top:189px;width:263px;height:21px;background:linear-gradient(180deg,#fbfaf3 0%,#f3eedb 55%,#eee5c4 100%);border-left:1px solid #c9bd98;border-bottom:1px solid #c9bd98"></div>
<div style="left:1388px;top:192.69px;font-size:11px;line-height:13px;color:#2a2418;">Набор данных</div>
<div style="left:1383px;top:210px;width:263px;height:42px;background:linear-gradient(180deg,#fbfaf3 0%,#f3eedb 55%,#eee5c4 100%);border-left:1px solid #c9bd98;border-bottom:1px solid #c9bd98"></div>
<div style="left:1388px;top:213.69px;font-size:11px;line-height:13px;color:#2a2418;">Параметр</div>
<div style="left:1646px;top:168px;width:131px;height:21px;background:linear-gradient(180deg,#fbfaf3 0%,#f3eedb 55%,#eee5c4 100%);border-left:1px solid #c9bd98;border-bottom:1px solid #c9bd98"></div>
<div style="left:1651px;top:171.69px;font-size:11px;line-height:13px;color:#2a2418;">Тип значения</div>
<div style="left:1646px;top:189px;width:131px;height:63px;background:linear-gradient(180deg,#fbfaf3 0%,#f3eedb 55%,#eee5c4 100%);border-left:1px solid #c9bd98;border-bottom:1px solid #c9bd98"></div>
<div style="left:1651px;top:192.69px;font-size:11px;line-height:13px;color:#2a2418;">Доступные значения</div>
<div style="left:1777px;top:168px;width:133px;height:21px;background:linear-gradient(180deg,#fbfaf3 0%,#f3eedb 55%,#eee5c4 100%);border-left:1px solid #c9bd98;border-bottom:1px solid #c9bd98"></div>
<div style="left:1782px;top:171.69px;font-size:11px;line-height:13px;color:#2a2418;">Оформление</div>
<div style="left:1777px;top:189px;width:133px;height:63px;background:linear-gradient(180deg,#fbfaf3 0%,#f3eedb 55%,#eee5c4 100%);border-left:1px solid #c9bd98;border-bottom:1px solid #c9bd98"></div>
<div style="left:1782px;top:192.69px;font-size:11px;line-height:13px;color:#2a2418;">Параметры</div>
<div style="left:1782px;top:205.69px;font-size:11px;line-height:13px;color:#2a2418;">редактирования</div>
<div style="left:517px;top:167px;width:1394px;height:1px;background:#b2a67e"></div>
<div style="left:517px;top:167px;width:1px;height:836px;background:#b2a67e"></div>
<div style="left:669px;top:270px;width:263px;height:1px;background:#ececec"></div>
<div style="left:932px;top:270px;width:189px;height:1px;background:#ececec"></div>
<div style="left:1252px;top:270px;width:131px;height:1px;background:#ececec"></div>
<div style="left:1383px;top:270px;width:263px;height:1px;background:#ececec"></div>
<div style="left:1646px;top:270px;width:131px;height:1px;background:#ececec"></div>
<div style="left:1777px;top:270px;width:133px;height:1px;background:#ececec"></div>
<div style="left:518px;top:289px;width:1392px;height:1px;background:#d3d8de"></div>
<div style="left:538px;top:252px;width:1px;height:37px;background:#d3d8de"></div>
<div style="left:669px;top:252px;width:1px;height:37px;background:#d3d8de"></div>
<div style="left:932px;top:252px;width:1px;height:37px;background:#d3d8de"></div>
<div style="left:1121px;top:252px;width:1px;height:37px;background:#d3d8de"></div>
<div style="left:1252px;top:252px;width:1px;height:37px;background:#d3d8de"></div>
<div style="left:1383px;top:252px;width:1px;height:37px;background:#d3d8de"></div>
<div style="left:1646px;top:252px;width:1px;height:37px;background:#d3d8de"></div>
<div style="left:1777px;top:252px;width:1px;height:37px;background:#d3d8de"></div>
<div style="left:979px;top:252px;width:1px;height:37px;background:#eef0f2"></div>
<div style="left:1026px;top:252px;width:1px;height:37px;background:#eef0f2"></div>
<div style="left:1073px;top:252px;width:1px;height:37px;background:#eef0f2"></div>
<div style="left:702px;top:271px;width:1px;height:18px;background:#eef0f2"></div>
<svg style="position:absolute;left:525px;top:260px" width="10" height="4" viewBox="0 0 10 4"><rect x="0.5" y="0.3" width="9" height="3.4" rx="1.7" fill="#a8c0d4" stroke="#5a7a94" stroke-width="0.8"/></svg>
<div style="left:543px;top:255.69px;font-size:11px;line-height:13px;color:#000;">Количество</div>
<div style="left:674px;top:255.69px;font-size:11px;line-height:13px;color:#000;">Количество</div>
<svg style="position:absolute;left:680px;top:274px" width="13" height="13" viewBox="0 0 13 13"><rect x="0.6" y="0.6" width="11.8" height="11.8" rx="2.4" fill="#fff" stroke="#958a68" stroke-width="1.15"/><path d="M3 6.5 L5.5 9 L10 4" stroke="#333" stroke-width="2" fill="none"/></svg>
<div style="left:707px;top:274.69px;font-size:11px;line-height:13px;color:#000;">Валовый сбор (этот год)</div>
<svg style="position:absolute;left:950px;top:255px" width="13" height="13" viewBox="0 0 13 13"><rect x="0.6" y="0.6" width="11.8" height="11.8" rx="2.4" fill="#fff" stroke="#958a68" stroke-width="1.15"/></svg>
<svg style="position:absolute;left:950px;top:274px" width="13" height="13" viewBox="0 0 13 13"><rect x="0.6" y="0.6" width="11.8" height="11.8" rx="2.4" fill="#fff" stroke="#958a68" stroke-width="1.15"/></svg>
<svg style="position:absolute;left:997px;top:255px" width="13" height="13" viewBox="0 0 13 13"><rect x="0.6" y="0.6" width="11.8" height="11.8" rx="2.4" fill="#fff" stroke="#958a68" stroke-width="1.15"/></svg>
<svg style="position:absolute;left:997px;top:274px" width="13" height="13" viewBox="0 0 13 13"><rect x="0.6" y="0.6" width="11.8" height="11.8" rx="2.4" fill="#fff" stroke="#958a68" stroke-width="1.15"/></svg>
<svg style="position:absolute;left:1044px;top:255px" width="13" height="13" viewBox="0 0 13 13"><rect x="0.6" y="0.6" width="11.8" height="11.8" rx="2.4" fill="#fff" stroke="#958a68" stroke-width="1.15"/></svg>
<svg style="position:absolute;left:1044px;top:274px" width="13" height="13" viewBox="0 0 13 13"><rect x="0.6" y="0.6" width="11.8" height="11.8" rx="2.4" fill="#fff" stroke="#958a68" stroke-width="1.15"/></svg>
<svg style="position:absolute;left:1091px;top:255px" width="13" height="13" viewBox="0 0 13 13"><rect x="0.6" y="0.6" width="11.8" height="11.8" rx="2.4" fill="#fff" stroke="#958a68" stroke-width="1.15"/></svg>
<svg style="position:absolute;left:1091px;top:274px" width="13" height="13" viewBox="0 0 13 13"><rect x="0.6" y="0.6" width="11.8" height="11.8" rx="2.4" fill="#fff" stroke="#958a68" stroke-width="1.15"/></svg>
<div style="left:669px;top:308px;width:263px;height:1px;background:#ececec"></div>
<div style="left:932px;top:308px;width:189px;height:1px;background:#ececec"></div>
<div style="left:1252px;top:308px;width:131px;height:1px;background:#ececec"></div>
<div style="left:1383px;top:308px;width:263px;height:1px;background:#ececec"></div>
<div style="left:1646px;top:308px;width:131px;height:1px;background:#ececec"></div>
<div style="left:1777px;top:308px;width:133px;height:1px;background:#ececec"></div>
<div style="left:518px;top:327px;width:1392px;height:1px;background:#d3d8de"></div>
<div style="left:538px;top:290px;width:1px;height:37px;background:#d3d8de"></div>
<div style="left:669px;top:290px;width:1px;height:37px;background:#d3d8de"></div>
<div style="left:932px;top:290px;width:1px;height:37px;background:#d3d8de"></div>
<div style="left:1121px;top:290px;width:1px;height:37px;background:#d3d8de"></div>
<div style="left:1252px;top:290px;width:1px;height:37px;background:#d3d8de"></div>
<div style="left:1383px;top:290px;width:1px;height:37px;background:#d3d8de"></div>
<div style="left:1646px;top:290px;width:1px;height:37px;background:#d3d8de"></div>
<div style="left:1777px;top:290px;width:1px;height:37px;background:#d3d8de"></div>
<div style="left:979px;top:290px;width:1px;height:37px;background:#eef0f2"></div>
<div style="left:1026px;top:290px;width:1px;height:37px;background:#eef0f2"></div>
<div style="left:1073px;top:290px;width:1px;height:37px;background:#eef0f2"></div>
<div style="left:702px;top:309px;width:1px;height:18px;background:#eef0f2"></div>
<svg style="position:absolute;left:525px;top:298px" width="10" height="4" viewBox="0 0 10 4"><rect x="0.5" y="0.3" width="9" height="3.4" rx="1.7" fill="#a8c0d4" stroke="#5a7a94" stroke-width="0.8"/></svg>
<div style="left:543px;top:293.69px;font-size:11px;line-height:13px;color:#000;">НоменклатурнаяГруппа</div>
<div style="left:674px;top:293.69px;font-size:11px;line-height:13px;color:#000;">НоменклатурнаяГруппа</div>
<svg style="position:absolute;left:680px;top:312px" width="13" height="13" viewBox="0 0 13 13"><rect x="0.6" y="0.6" width="11.8" height="11.8" rx="2.4" fill="#fff" stroke="#958a68" stroke-width="1.15"/></svg>
<div style="left:707px;top:312.69px;font-size:11px;line-height:13px;color:#8a8a8a;">Номенклатурная группа</div>
<svg style="position:absolute;left:950px;top:293px" width="13" height="13" viewBox="0 0 13 13"><rect x="0.6" y="0.6" width="11.8" height="11.8" rx="2.4" fill="#fff" stroke="#958a68" stroke-width="1.15"/></svg>
<svg style="position:absolute;left:950px;top:312px" width="13" height="13" viewBox="0 0 13 13"><rect x="0.6" y="0.6" width="11.8" height="11.8" rx="2.4" fill="#fff" stroke="#958a68" stroke-width="1.15"/></svg>
<svg style="position:absolute;left:997px;top:293px" width="13" height="13" viewBox="0 0 13 13"><rect x="0.6" y="0.6" width="11.8" height="11.8" rx="2.4" fill="#fff" stroke="#958a68" stroke-width="1.15"/></svg>
<svg style="position:absolute;left:997px;top:312px" width="13" height="13" viewBox="0 0 13 13"><rect x="0.6" y="0.6" width="11.8" height="11.8" rx="2.4" fill="#fff" stroke="#958a68" stroke-width="1.15"/></svg>
<svg style="position:absolute;left:1044px;top:293px" width="13" height="13" viewBox="0 0 13 13"><rect x="0.6" y="0.6" width="11.8" height="11.8" rx="2.4" fill="#fff" stroke="#958a68" stroke-width="1.15"/></svg>
<svg style="position:absolute;left:1044px;top:312px" width="13" height="13" viewBox="0 0 13 13"><rect x="0.6" y="0.6" width="11.8" height="11.8" rx="2.4" fill="#fff" stroke="#958a68" stroke-width="1.15"/></svg>
<svg style="position:absolute;left:1091px;top:293px" width="13" height="13" viewBox="0 0 13 13"><rect x="0.6" y="0.6" width="11.8" height="11.8" rx="2.4" fill="#fff" stroke="#958a68" stroke-width="1.15"/></svg>
<svg style="position:absolute;left:1091px;top:312px" width="13" height="13" viewBox="0 0 13 13"><rect x="0.6" y="0.6" width="11.8" height="11.8" rx="2.4" fill="#fff" stroke="#958a68" stroke-width="1.15"/></svg>
<div style="left:669px;top:346px;width:263px;height:1px;background:#b4c8e6"></div>
<div style="left:932px;top:346px;width:189px;height:1px;background:#b4c8e6"></div>
<div style="left:1252px;top:346px;width:131px;height:1px;background:#b4c8e6"></div>
<div style="left:1383px;top:346px;width:263px;height:1px;background:#b4c8e6"></div>
<div style="left:1646px;top:346px;width:131px;height:1px;background:#b4c8e6"></div>
<div style="left:1777px;top:346px;width:133px;height:1px;background:#b4c8e6"></div>
<div style="left:518px;top:365px;width:1392px;height:1px;background:#b4c8e6"></div>
<div style="left:538px;top:328px;width:1px;height:37px;background:#b4c8e6"></div>
<div style="left:669px;top:328px;width:1px;height:37px;background:#b4c8e6"></div>
<div style="left:932px;top:328px;width:1px;height:37px;background:#b4c8e6"></div>
<div style="left:1121px;top:328px;width:1px;height:37px;background:#b4c8e6"></div>
<div style="left:1252px;top:328px;width:1px;height:37px;background:#b4c8e6"></div>
<div style="left:1383px;top:328px;width:1px;height:37px;background:#b4c8e6"></div>
<div style="left:1646px;top:328px;width:1px;height:37px;background:#b4c8e6"></div>
<div style="left:1777px;top:328px;width:1px;height:37px;background:#b4c8e6"></div>
<div style="left:979px;top:328px;width:1px;height:37px;background:#e6ebf2"></div>
<div style="left:1026px;top:328px;width:1px;height:37px;background:#e6ebf2"></div>
<div style="left:1073px;top:328px;width:1px;height:37px;background:#e6ebf2"></div>
<div style="left:702px;top:347px;width:1px;height:18px;background:#dde6f2"></div>
<svg style="position:absolute;left:525px;top:336px" width="10" height="4" viewBox="0 0 10 4"><rect x="0.5" y="0.3" width="9" height="3.4" rx="1.7" fill="#a8c0d4" stroke="#5a7a94" stroke-width="0.8"/></svg>
<div style="left:543px;top:331.69px;font-size:11px;line-height:13px;color:#000;">НомерМесяца</div>
<div style="left:674px;top:331.69px;font-size:11px;line-height:13px;color:#000;">НомерМесяца</div>
<svg style="position:absolute;left:680px;top:350px" width="13" height="13" viewBox="0 0 13 13"><rect x="0.6" y="0.6" width="11.8" height="11.8" rx="2.4" fill="#fff" stroke="#958a68" stroke-width="1.15"/><path d="M3 6.5 L5.5 9 L10 4" stroke="#333" stroke-width="2" fill="none"/></svg>
<div style="left:707px;top:350.69px;font-size:11px;line-height:13px;color:#000;">Номер месяца</div>
<svg style="position:absolute;left:950px;top:331px" width="13" height="13" viewBox="0 0 13 13"><rect x="0.6" y="0.6" width="11.8" height="11.8" rx="2.4" fill="#fff" stroke="#958a68" stroke-width="1.15"/></svg>
<svg style="position:absolute;left:950px;top:350px" width="13" height="13" viewBox="0 0 13 13"><rect x="0.6" y="0.6" width="11.8" height="11.8" rx="2.4" fill="#fff" stroke="#958a68" stroke-width="1.15"/></svg>
<svg style="position:absolute;left:997px;top:331px" width="13" height="13" viewBox="0 0 13 13"><rect x="0.6" y="0.6" width="11.8" height="11.8" rx="2.4" fill="#fff" stroke="#958a68" stroke-width="1.15"/></svg>
<svg style="position:absolute;left:997px;top:350px" width="13" height="13" viewBox="0 0 13 13"><rect x="0.6" y="0.6" width="11.8" height="11.8" rx="2.4" fill="#fff" stroke="#958a68" stroke-width="1.15"/></svg>
<svg style="position:absolute;left:1044px;top:331px" width="13" height="13" viewBox="0 0 13 13"><rect x="0.6" y="0.6" width="11.8" height="11.8" rx="2.4" fill="#fff" stroke="#958a68" stroke-width="1.15"/></svg>
<svg style="position:absolute;left:1044px;top:350px" width="13" height="13" viewBox="0 0 13 13"><rect x="0.6" y="0.6" width="11.8" height="11.8" rx="2.4" fill="#fff" stroke="#958a68" stroke-width="1.15"/></svg>
<svg style="position:absolute;left:1091px;top:331px" width="13" height="13" viewBox="0 0 13 13"><rect x="0.6" y="0.6" width="11.8" height="11.8" rx="2.4" fill="#fff" stroke="#958a68" stroke-width="1.15"/></svg>
<svg style="position:absolute;left:1091px;top:350px" width="13" height="13" viewBox="0 0 13 13"><rect x="0.6" y="0.6" width="11.8" height="11.8" rx="2.4" fill="#fff" stroke="#958a68" stroke-width="1.15"/></svg>
<div style="left:1126px;top:331.69px;font-size:11px;line-height:13px;color:#000;">NULL</div>
<div style="left:1782px;top:331px;width:110px;height:14px;overflow:hidden;font-size:11px;line-height:14px;color:#111">Горизонтальное поло</div>
<div style="left:1893px;top:329px;width:16px;height:17px;background:linear-gradient(180deg,#f8f6ec,#e6dfc4);border:1px solid #d0c6a4"></div>
<div style="left:1896px;top:331.69px;font-size:11px;line-height:13px;color:#000;">...</div>
<div style="left:669px;top:384px;width:263px;height:1px;background:#ececec"></div>
<div style="left:932px;top:384px;width:189px;height:1px;background:#ececec"></div>
<div style="left:1252px;top:384px;width:131px;height:1px;background:#ececec"></div>
<div style="left:1383px;top:384px;width:263px;height:1px;background:#ececec"></div>
<div style="left:1646px;top:384px;width:131px;height:1px;background:#ececec"></div>
<div style="left:1777px;top:384px;width:133px;height:1px;background:#ececec"></div>
<div style="left:518px;top:403px;width:1392px;height:1px;background:#d3d8de"></div>
<div style="left:538px;top:366px;width:1px;height:37px;background:#d3d8de"></div>
<div style="left:669px;top:366px;width:1px;height:37px;background:#d3d8de"></div>
<div style="left:932px;top:366px;width:1px;height:37px;background:#d3d8de"></div>
<div style="left:1121px;top:366px;width:1px;height:37px;background:#d3d8de"></div>
<div style="left:1252px;top:366px;width:1px;height:37px;background:#d3d8de"></div>
<div style="left:1383px;top:366px;width:1px;height:37px;background:#d3d8de"></div>
<div style="left:1646px;top:366px;width:1px;height:37px;background:#d3d8de"></div>
<div style="left:1777px;top:366px;width:1px;height:37px;background:#d3d8de"></div>
<div style="left:979px;top:366px;width:1px;height:37px;background:#eef0f2"></div>
<div style="left:1026px;top:366px;width:1px;height:37px;background:#eef0f2"></div>
<div style="left:1073px;top:366px;width:1px;height:37px;background:#eef0f2"></div>
<div style="left:702px;top:385px;width:1px;height:18px;background:#eef0f2"></div>
<svg style="position:absolute;left:525px;top:374px" width="10" height="4" viewBox="0 0 10 4"><rect x="0.5" y="0.3" width="9" height="3.4" rx="1.7" fill="#a8c0d4" stroke="#5a7a94" stroke-width="0.8"/></svg>
<div style="left:543px;top:369.69px;font-size:11px;line-height:13px;color:#000;">Площадь</div>
<div style="left:674px;top:369.69px;font-size:11px;line-height:13px;color:#000;">Площадь</div>
<svg style="position:absolute;left:680px;top:388px" width="13" height="13" viewBox="0 0 13 13"><rect x="0.6" y="0.6" width="11.8" height="11.8" rx="2.4" fill="#fff" stroke="#958a68" stroke-width="1.15"/><path d="M3 6.5 L5.5 9 L10 4" stroke="#333" stroke-width="2" fill="none"/></svg>
<div style="left:707px;top:388.69px;font-size:11px;line-height:13px;color:#000;">Площадь</div>
<svg style="position:absolute;left:950px;top:369px" width="13" height="13" viewBox="0 0 13 13"><rect x="0.6" y="0.6" width="11.8" height="11.8" rx="2.4" fill="#fff" stroke="#958a68" stroke-width="1.15"/></svg>
<svg style="position:absolute;left:950px;top:388px" width="13" height="13" viewBox="0 0 13 13"><rect x="0.6" y="0.6" width="11.8" height="11.8" rx="2.4" fill="#fff" stroke="#958a68" stroke-width="1.15"/></svg>
<svg style="position:absolute;left:997px;top:369px" width="13" height="13" viewBox="0 0 13 13"><rect x="0.6" y="0.6" width="11.8" height="11.8" rx="2.4" fill="#fff" stroke="#958a68" stroke-width="1.15"/></svg>
<svg style="position:absolute;left:997px;top:388px" width="13" height="13" viewBox="0 0 13 13"><rect x="0.6" y="0.6" width="11.8" height="11.8" rx="2.4" fill="#fff" stroke="#958a68" stroke-width="1.15"/></svg>
<svg style="position:absolute;left:1044px;top:369px" width="13" height="13" viewBox="0 0 13 13"><rect x="0.6" y="0.6" width="11.8" height="11.8" rx="2.4" fill="#fff" stroke="#958a68" stroke-width="1.15"/></svg>
<svg style="position:absolute;left:1044px;top:388px" width="13" height="13" viewBox="0 0 13 13"><rect x="0.6" y="0.6" width="11.8" height="11.8" rx="2.4" fill="#fff" stroke="#958a68" stroke-width="1.15"/></svg>
<svg style="position:absolute;left:1091px;top:369px" width="13" height="13" viewBox="0 0 13 13"><rect x="0.6" y="0.6" width="11.8" height="11.8" rx="2.4" fill="#fff" stroke="#958a68" stroke-width="1.15"/></svg>
<svg style="position:absolute;left:1091px;top:388px" width="13" height="13" viewBox="0 0 13 13"><rect x="0.6" y="0.6" width="11.8" height="11.8" rx="2.4" fill="#fff" stroke="#958a68" stroke-width="1.15"/></svg>
<div style="left:1782px;top:369.69px;font-size:11px;line-height:13px;color:#000;">Формат</div>
<div style="left:669px;top:422px;width:263px;height:1px;background:#ececec"></div>
<div style="left:932px;top:422px;width:189px;height:1px;background:#ececec"></div>
<div style="left:1252px;top:422px;width:131px;height:1px;background:#ececec"></div>
<div style="left:1383px;top:422px;width:263px;height:1px;background:#ececec"></div>
<div style="left:1646px;top:422px;width:131px;height:1px;background:#ececec"></div>
<div style="left:1777px;top:422px;width:133px;height:1px;background:#ececec"></div>
<div style="left:518px;top:441px;width:1392px;height:1px;background:#d3d8de"></div>
<div style="left:538px;top:404px;width:1px;height:37px;background:#d3d8de"></div>
<div style="left:669px;top:404px;width:1px;height:37px;background:#d3d8de"></div>
<div style="left:932px;top:404px;width:1px;height:37px;background:#d3d8de"></div>
<div style="left:1121px;top:404px;width:1px;height:37px;background:#d3d8de"></div>
<div style="left:1252px;top:404px;width:1px;height:37px;background:#d3d8de"></div>
<div style="left:1383px;top:404px;width:1px;height:37px;background:#d3d8de"></div>
<div style="left:1646px;top:404px;width:1px;height:37px;background:#d3d8de"></div>
<div style="left:1777px;top:404px;width:1px;height:37px;background:#d3d8de"></div>
<div style="left:979px;top:404px;width:1px;height:37px;background:#eef0f2"></div>
<div style="left:1026px;top:404px;width:1px;height:37px;background:#eef0f2"></div>
<div style="left:1073px;top:404px;width:1px;height:37px;background:#eef0f2"></div>
<div style="left:702px;top:423px;width:1px;height:18px;background:#eef0f2"></div>
<svg style="position:absolute;left:525px;top:412px" width="10" height="4" viewBox="0 0 10 4"><rect x="0.5" y="0.3" width="9" height="3.4" rx="1.7" fill="#a8c0d4" stroke="#5a7a94" stroke-width="0.8"/></svg>
<div style="left:543px;top:407.69px;font-size:11px;line-height:13px;color:#000;">Подразделение</div>
<div style="left:674px;top:407.69px;font-size:11px;line-height:13px;color:#000;">Подразделение</div>
<svg style="position:absolute;left:680px;top:426px" width="13" height="13" viewBox="0 0 13 13"><rect x="0.6" y="0.6" width="11.8" height="11.8" rx="2.4" fill="#fff" stroke="#958a68" stroke-width="1.15"/></svg>
<div style="left:707px;top:426.69px;font-size:11px;line-height:13px;color:#8a8a8a;">Подразделение</div>
<svg style="position:absolute;left:950px;top:407px" width="13" height="13" viewBox="0 0 13 13"><rect x="0.6" y="0.6" width="11.8" height="11.8" rx="2.4" fill="#fff" stroke="#958a68" stroke-width="1.15"/></svg>
<svg style="position:absolute;left:950px;top:426px" width="13" height="13" viewBox="0 0 13 13"><rect x="0.6" y="0.6" width="11.8" height="11.8" rx="2.4" fill="#fff" stroke="#958a68" stroke-width="1.15"/></svg>
<svg style="position:absolute;left:997px;top:407px" width="13" height="13" viewBox="0 0 13 13"><rect x="0.6" y="0.6" width="11.8" height="11.8" rx="2.4" fill="#fff" stroke="#958a68" stroke-width="1.15"/></svg>
<svg style="position:absolute;left:997px;top:426px" width="13" height="13" viewBox="0 0 13 13"><rect x="0.6" y="0.6" width="11.8" height="11.8" rx="2.4" fill="#fff" stroke="#958a68" stroke-width="1.15"/></svg>
<svg style="position:absolute;left:1044px;top:407px" width="13" height="13" viewBox="0 0 13 13"><rect x="0.6" y="0.6" width="11.8" height="11.8" rx="2.4" fill="#fff" stroke="#958a68" stroke-width="1.15"/></svg>
<svg style="position:absolute;left:1044px;top:426px" width="13" height="13" viewBox="0 0 13 13"><rect x="0.6" y="0.6" width="11.8" height="11.8" rx="2.4" fill="#fff" stroke="#958a68" stroke-width="1.15"/></svg>
<svg style="position:absolute;left:1091px;top:407px" width="13" height="13" viewBox="0 0 13 13"><rect x="0.6" y="0.6" width="11.8" height="11.8" rx="2.4" fill="#fff" stroke="#958a68" stroke-width="1.15"/></svg>
<svg style="position:absolute;left:1091px;top:426px" width="13" height="13" viewBox="0 0 13 13"><rect x="0.6" y="0.6" width="11.8" height="11.8" rx="2.4" fill="#fff" stroke="#958a68" stroke-width="1.15"/></svg>
<div style="left:669px;top:460px;width:263px;height:1px;background:#ececec"></div>
<div style="left:932px;top:460px;width:189px;height:1px;background:#ececec"></div>
<div style="left:1252px;top:460px;width:131px;height:1px;background:#ececec"></div>
<div style="left:1383px;top:460px;width:263px;height:1px;background:#ececec"></div>
<div style="left:1646px;top:460px;width:131px;height:1px;background:#ececec"></div>
<div style="left:1777px;top:460px;width:133px;height:1px;background:#ececec"></div>
<div style="left:518px;top:479px;width:1392px;height:1px;background:#d3d8de"></div>
<div style="left:538px;top:442px;width:1px;height:37px;background:#d3d8de"></div>
<div style="left:669px;top:442px;width:1px;height:37px;background:#d3d8de"></div>
<div style="left:932px;top:442px;width:1px;height:37px;background:#d3d8de"></div>
<div style="left:1121px;top:442px;width:1px;height:37px;background:#d3d8de"></div>
<div style="left:1252px;top:442px;width:1px;height:37px;background:#d3d8de"></div>
<div style="left:1383px;top:442px;width:1px;height:37px;background:#d3d8de"></div>
<div style="left:1646px;top:442px;width:1px;height:37px;background:#d3d8de"></div>
<div style="left:1777px;top:442px;width:1px;height:37px;background:#d3d8de"></div>
<div style="left:979px;top:442px;width:1px;height:37px;background:#eef0f2"></div>
<div style="left:1026px;top:442px;width:1px;height:37px;background:#eef0f2"></div>
<div style="left:1073px;top:442px;width:1px;height:37px;background:#eef0f2"></div>
<div style="left:702px;top:461px;width:1px;height:18px;background:#eef0f2"></div>
<svg style="position:absolute;left:525px;top:450px" width="10" height="4" viewBox="0 0 10 4"><rect x="0.5" y="0.3" width="9" height="3.4" rx="1.7" fill="#a8c0d4" stroke="#5a7a94" stroke-width="0.8"/></svg>
<div style="left:543px;top:445.69px;font-size:11px;line-height:13px;color:#000;">Поле</div>
<div style="left:674px;top:445.69px;font-size:11px;line-height:13px;color:#000;">Поле</div>
<svg style="position:absolute;left:680px;top:464px" width="13" height="13" viewBox="0 0 13 13"><rect x="0.6" y="0.6" width="11.8" height="11.8" rx="2.4" fill="#fff" stroke="#958a68" stroke-width="1.15"/><path d="M3 6.5 L5.5 9 L10 4" stroke="#333" stroke-width="2" fill="none"/></svg>
<div style="left:707px;top:464.69px;font-size:11px;line-height:13px;color:#000;">Поле</div>
<svg style="position:absolute;left:950px;top:445px" width="13" height="13" viewBox="0 0 13 13"><rect x="0.6" y="0.6" width="11.8" height="11.8" rx="2.4" fill="#fff" stroke="#958a68" stroke-width="1.15"/></svg>
<svg style="position:absolute;left:950px;top:464px" width="13" height="13" viewBox="0 0 13 13"><rect x="0.6" y="0.6" width="11.8" height="11.8" rx="2.4" fill="#fff" stroke="#958a68" stroke-width="1.15"/></svg>
<svg style="position:absolute;left:997px;top:445px" width="13" height="13" viewBox="0 0 13 13"><rect x="0.6" y="0.6" width="11.8" height="11.8" rx="2.4" fill="#fff" stroke="#958a68" stroke-width="1.15"/></svg>
<svg style="position:absolute;left:997px;top:464px" width="13" height="13" viewBox="0 0 13 13"><rect x="0.6" y="0.6" width="11.8" height="11.8" rx="2.4" fill="#fff" stroke="#958a68" stroke-width="1.15"/></svg>
<svg style="position:absolute;left:1044px;top:445px" width="13" height="13" viewBox="0 0 13 13"><rect x="0.6" y="0.6" width="11.8" height="11.8" rx="2.4" fill="#fff" stroke="#958a68" stroke-width="1.15"/></svg>
<svg style="position:absolute;left:1044px;top:464px" width="13" height="13" viewBox="0 0 13 13"><rect x="0.6" y="0.6" width="11.8" height="11.8" rx="2.4" fill="#fff" stroke="#958a68" stroke-width="1.15"/></svg>
<svg style="position:absolute;left:1091px;top:445px" width="13" height="13" viewBox="0 0 13 13"><rect x="0.6" y="0.6" width="11.8" height="11.8" rx="2.4" fill="#fff" stroke="#958a68" stroke-width="1.15"/></svg>
<svg style="position:absolute;left:1091px;top:464px" width="13" height="13" viewBox="0 0 13 13"><rect x="0.6" y="0.6" width="11.8" height="11.8" rx="2.4" fill="#fff" stroke="#958a68" stroke-width="1.15"/></svg>
<div style="left:669px;top:498px;width:263px;height:1px;background:#ececec"></div>
<div style="left:932px;top:498px;width:189px;height:1px;background:#ececec"></div>
<div style="left:1252px;top:498px;width:131px;height:1px;background:#ececec"></div>
<div style="left:1383px;top:498px;width:263px;height:1px;background:#ececec"></div>
<div style="left:1646px;top:498px;width:131px;height:1px;background:#ececec"></div>
<div style="left:1777px;top:498px;width:133px;height:1px;background:#ececec"></div>
<div style="left:518px;top:517px;width:1392px;height:1px;background:#d3d8de"></div>
<div style="left:538px;top:480px;width:1px;height:37px;background:#d3d8de"></div>
<div style="left:669px;top:480px;width:1px;height:37px;background:#d3d8de"></div>
<div style="left:932px;top:480px;width:1px;height:37px;background:#d3d8de"></div>
<div style="left:1121px;top:480px;width:1px;height:37px;background:#d3d8de"></div>
<div style="left:1252px;top:480px;width:1px;height:37px;background:#d3d8de"></div>
<div style="left:1383px;top:480px;width:1px;height:37px;background:#d3d8de"></div>
<div style="left:1646px;top:480px;width:1px;height:37px;background:#d3d8de"></div>
<div style="left:1777px;top:480px;width:1px;height:37px;background:#d3d8de"></div>
<div style="left:979px;top:480px;width:1px;height:37px;background:#eef0f2"></div>
<div style="left:1026px;top:480px;width:1px;height:37px;background:#eef0f2"></div>
<div style="left:1073px;top:480px;width:1px;height:37px;background:#eef0f2"></div>
<div style="left:702px;top:499px;width:1px;height:18px;background:#eef0f2"></div>
<svg style="position:absolute;left:525px;top:488px" width="10" height="4" viewBox="0 0 10 4"><rect x="0.5" y="0.3" width="9" height="3.4" rx="1.7" fill="#a8c0d4" stroke="#5a7a94" stroke-width="0.8"/></svg>
<div style="left:543px;top:483.69px;font-size:11px;line-height:13px;color:#000;">Продукция</div>
<div style="left:674px;top:483.69px;font-size:11px;line-height:13px;color:#000;">Продукция</div>
<svg style="position:absolute;left:680px;top:502px" width="13" height="13" viewBox="0 0 13 13"><rect x="0.6" y="0.6" width="11.8" height="11.8" rx="2.4" fill="#fff" stroke="#958a68" stroke-width="1.15"/><path d="M3 6.5 L5.5 9 L10 4" stroke="#333" stroke-width="2" fill="none"/></svg>
<div style="left:707px;top:502.69px;font-size:11px;line-height:13px;color:#000;">Продукция</div>
<svg style="position:absolute;left:950px;top:483px" width="13" height="13" viewBox="0 0 13 13"><rect x="0.6" y="0.6" width="11.8" height="11.8" rx="2.4" fill="#fff" stroke="#958a68" stroke-width="1.15"/></svg>
<svg style="position:absolute;left:950px;top:502px" width="13" height="13" viewBox="0 0 13 13"><rect x="0.6" y="0.6" width="11.8" height="11.8" rx="2.4" fill="#fff" stroke="#958a68" stroke-width="1.15"/></svg>
<svg style="position:absolute;left:997px;top:483px" width="13" height="13" viewBox="0 0 13 13"><rect x="0.6" y="0.6" width="11.8" height="11.8" rx="2.4" fill="#fff" stroke="#958a68" stroke-width="1.15"/></svg>
<svg style="position:absolute;left:997px;top:502px" width="13" height="13" viewBox="0 0 13 13"><rect x="0.6" y="0.6" width="11.8" height="11.8" rx="2.4" fill="#fff" stroke="#958a68" stroke-width="1.15"/></svg>
<svg style="position:absolute;left:1044px;top:483px" width="13" height="13" viewBox="0 0 13 13"><rect x="0.6" y="0.6" width="11.8" height="11.8" rx="2.4" fill="#fff" stroke="#958a68" stroke-width="1.15"/></svg>
<svg style="position:absolute;left:1044px;top:502px" width="13" height="13" viewBox="0 0 13 13"><rect x="0.6" y="0.6" width="11.8" height="11.8" rx="2.4" fill="#fff" stroke="#958a68" stroke-width="1.15"/></svg>
<svg style="position:absolute;left:1091px;top:483px" width="13" height="13" viewBox="0 0 13 13"><rect x="0.6" y="0.6" width="11.8" height="11.8" rx="2.4" fill="#fff" stroke="#958a68" stroke-width="1.15"/></svg>
<svg style="position:absolute;left:1091px;top:502px" width="13" height="13" viewBox="0 0 13 13"><rect x="0.6" y="0.6" width="11.8" height="11.8" rx="2.4" fill="#fff" stroke="#958a68" stroke-width="1.15"/></svg>
<div style="left:669px;top:536px;width:263px;height:1px;background:#ececec"></div>
<div style="left:932px;top:536px;width:189px;height:1px;background:#ececec"></div>
<div style="left:1252px;top:536px;width:131px;height:1px;background:#ececec"></div>
<div style="left:1383px;top:536px;width:263px;height:1px;background:#ececec"></div>
<div style="left:1646px;top:536px;width:131px;height:1px;background:#ececec"></div>
<div style="left:1777px;top:536px;width:133px;height:1px;background:#ececec"></div>
<div style="left:518px;top:555px;width:1392px;height:1px;background:#d3d8de"></div>
<div style="left:538px;top:518px;width:1px;height:37px;background:#d3d8de"></div>
<div style="left:669px;top:518px;width:1px;height:37px;background:#d3d8de"></div>
<div style="left:932px;top:518px;width:1px;height:37px;background:#d3d8de"></div>
<div style="left:1121px;top:518px;width:1px;height:37px;background:#d3d8de"></div>
<div style="left:1252px;top:518px;width:1px;height:37px;background:#d3d8de"></div>
<div style="left:1383px;top:518px;width:1px;height:37px;background:#d3d8de"></div>
<div style="left:1646px;top:518px;width:1px;height:37px;background:#d3d8de"></div>
<div style="left:1777px;top:518px;width:1px;height:37px;background:#d3d8de"></div>
<div style="left:979px;top:518px;width:1px;height:37px;background:#eef0f2"></div>
<div style="left:1026px;top:518px;width:1px;height:37px;background:#eef0f2"></div>
<div style="left:1073px;top:518px;width:1px;height:37px;background:#eef0f2"></div>
<div style="left:702px;top:537px;width:1px;height:18px;background:#eef0f2"></div>
<svg style="position:absolute;left:525px;top:526px" width="10" height="4" viewBox="0 0 10 4"><rect x="0.5" y="0.3" width="9" height="3.4" rx="1.7" fill="#a8c0d4" stroke="#5a7a94" stroke-width="0.8"/></svg>
<div style="left:543px;top:521.69px;font-size:11px;line-height:13px;color:#000;">Урожайность</div>
<div style="left:674px;top:521.69px;font-size:11px;line-height:13px;color:#000;">Урожайность</div>
<svg style="position:absolute;left:680px;top:540px" width="13" height="13" viewBox="0 0 13 13"><rect x="0.6" y="0.6" width="11.8" height="11.8" rx="2.4" fill="#fff" stroke="#958a68" stroke-width="1.15"/></svg>
<div style="left:707px;top:540.69px;font-size:11px;line-height:13px;color:#8a8a8a;">Урожайность</div>
<svg style="position:absolute;left:950px;top:521px" width="13" height="13" viewBox="0 0 13 13"><rect x="0.6" y="0.6" width="11.8" height="11.8" rx="2.4" fill="#fff" stroke="#958a68" stroke-width="1.15"/></svg>
<svg style="position:absolute;left:950px;top:540px" width="13" height="13" viewBox="0 0 13 13"><rect x="0.6" y="0.6" width="11.8" height="11.8" rx="2.4" fill="#fff" stroke="#958a68" stroke-width="1.15"/></svg>
<svg style="position:absolute;left:997px;top:521px" width="13" height="13" viewBox="0 0 13 13"><rect x="0.6" y="0.6" width="11.8" height="11.8" rx="2.4" fill="#fff" stroke="#958a68" stroke-width="1.15"/></svg>
<svg style="position:absolute;left:997px;top:540px" width="13" height="13" viewBox="0 0 13 13"><rect x="0.6" y="0.6" width="11.8" height="11.8" rx="2.4" fill="#fff" stroke="#958a68" stroke-width="1.15"/></svg>
<svg style="position:absolute;left:1044px;top:521px" width="13" height="13" viewBox="0 0 13 13"><rect x="0.6" y="0.6" width="11.8" height="11.8" rx="2.4" fill="#fff" stroke="#958a68" stroke-width="1.15"/></svg>
<svg style="position:absolute;left:1044px;top:540px" width="13" height="13" viewBox="0 0 13 13"><rect x="0.6" y="0.6" width="11.8" height="11.8" rx="2.4" fill="#fff" stroke="#958a68" stroke-width="1.15"/></svg>
<svg style="position:absolute;left:1091px;top:521px" width="13" height="13" viewBox="0 0 13 13"><rect x="0.6" y="0.6" width="11.8" height="11.8" rx="2.4" fill="#fff" stroke="#958a68" stroke-width="1.15"/></svg>
<svg style="position:absolute;left:1091px;top:540px" width="13" height="13" viewBox="0 0 13 13"><rect x="0.6" y="0.6" width="11.8" height="11.8" rx="2.4" fill="#fff" stroke="#958a68" stroke-width="1.15"/></svg>
<div style="left:1782px;top:521.69px;font-size:11px;line-height:13px;color:#000;">Формат</div>
<div style="left:669px;top:574px;width:263px;height:1px;background:#ececec"></div>
<div style="left:932px;top:574px;width:189px;height:1px;background:#ececec"></div>
<div style="left:1252px;top:574px;width:131px;height:1px;background:#ececec"></div>
<div style="left:1383px;top:574px;width:263px;height:1px;background:#ececec"></div>
<div style="left:1646px;top:574px;width:131px;height:1px;background:#ececec"></div>
<div style="left:1777px;top:574px;width:133px;height:1px;background:#ececec"></div>
<div style="left:518px;top:593px;width:1392px;height:1px;background:#d3d8de"></div>
<div style="left:538px;top:556px;width:1px;height:37px;background:#d3d8de"></div>
<div style="left:669px;top:556px;width:1px;height:37px;background:#d3d8de"></div>
<div style="left:932px;top:556px;width:1px;height:37px;background:#d3d8de"></div>
<div style="left:1121px;top:556px;width:1px;height:37px;background:#d3d8de"></div>
<div style="left:1252px;top:556px;width:1px;height:37px;background:#d3d8de"></div>
<div style="left:1383px;top:556px;width:1px;height:37px;background:#d3d8de"></div>
<div style="left:1646px;top:556px;width:1px;height:37px;background:#d3d8de"></div>
<div style="left:1777px;top:556px;width:1px;height:37px;background:#d3d8de"></div>
<div style="left:979px;top:556px;width:1px;height:37px;background:#eef0f2"></div>
<div style="left:1026px;top:556px;width:1px;height:37px;background:#eef0f2"></div>
<div style="left:1073px;top:556px;width:1px;height:37px;background:#eef0f2"></div>
<div style="left:702px;top:575px;width:1px;height:18px;background:#eef0f2"></div>
<svg style="position:absolute;left:525px;top:564px" width="10" height="4" viewBox="0 0 10 4"><rect x="0.5" y="0.3" width="9" height="3.4" rx="1.7" fill="#a8c0d4" stroke="#5a7a94" stroke-width="0.8"/></svg>
<div style="left:543px;top:559.69px;font-size:11px;line-height:13px;color:#000;">Количество2013</div>
<div style="left:674px;top:559.69px;font-size:11px;line-height:13px;color:#000;">Количество2013</div>
<svg style="position:absolute;left:680px;top:578px" width="13" height="13" viewBox="0 0 13 13"><rect x="0.6" y="0.6" width="11.8" height="11.8" rx="2.4" fill="#fff" stroke="#958a68" stroke-width="1.15"/><path d="M3 6.5 L5.5 9 L10 4" stroke="#333" stroke-width="2" fill="none"/></svg>
<div style="left:707px;top:578.69px;font-size:11px;line-height:13px;color:#000;">Валовый сбор (прошлый год)</div>
<svg style="position:absolute;left:950px;top:559px" width="13" height="13" viewBox="0 0 13 13"><rect x="0.6" y="0.6" width="11.8" height="11.8" rx="2.4" fill="#fff" stroke="#958a68" stroke-width="1.15"/></svg>
<svg style="position:absolute;left:950px;top:578px" width="13" height="13" viewBox="0 0 13 13"><rect x="0.6" y="0.6" width="11.8" height="11.8" rx="2.4" fill="#fff" stroke="#958a68" stroke-width="1.15"/></svg>
<svg style="position:absolute;left:997px;top:559px" width="13" height="13" viewBox="0 0 13 13"><rect x="0.6" y="0.6" width="11.8" height="11.8" rx="2.4" fill="#fff" stroke="#958a68" stroke-width="1.15"/></svg>
<svg style="position:absolute;left:997px;top:578px" width="13" height="13" viewBox="0 0 13 13"><rect x="0.6" y="0.6" width="11.8" height="11.8" rx="2.4" fill="#fff" stroke="#958a68" stroke-width="1.15"/></svg>
<svg style="position:absolute;left:1044px;top:559px" width="13" height="13" viewBox="0 0 13 13"><rect x="0.6" y="0.6" width="11.8" height="11.8" rx="2.4" fill="#fff" stroke="#958a68" stroke-width="1.15"/></svg>
<svg style="position:absolute;left:1044px;top:578px" width="13" height="13" viewBox="0 0 13 13"><rect x="0.6" y="0.6" width="11.8" height="11.8" rx="2.4" fill="#fff" stroke="#958a68" stroke-width="1.15"/></svg>
<svg style="position:absolute;left:1091px;top:559px" width="13" height="13" viewBox="0 0 13 13"><rect x="0.6" y="0.6" width="11.8" height="11.8" rx="2.4" fill="#fff" stroke="#958a68" stroke-width="1.15"/></svg>
<svg style="position:absolute;left:1091px;top:578px" width="13" height="13" viewBox="0 0 13 13"><rect x="0.6" y="0.6" width="11.8" height="11.8" rx="2.4" fill="#fff" stroke="#958a68" stroke-width="1.15"/></svg>
<div style="left:669px;top:612px;width:263px;height:1px;background:#ececec"></div>
<div style="left:932px;top:612px;width:189px;height:1px;background:#ececec"></div>
<div style="left:1252px;top:612px;width:131px;height:1px;background:#ececec"></div>
<div style="left:1383px;top:612px;width:263px;height:1px;background:#ececec"></div>
<div style="left:1646px;top:612px;width:131px;height:1px;background:#ececec"></div>
<div style="left:1777px;top:612px;width:133px;height:1px;background:#ececec"></div>
<div style="left:518px;top:631px;width:1392px;height:1px;background:#d3d8de"></div>
<div style="left:538px;top:594px;width:1px;height:37px;background:#d3d8de"></div>
<div style="left:669px;top:594px;width:1px;height:37px;background:#d3d8de"></div>
<div style="left:932px;top:594px;width:1px;height:37px;background:#d3d8de"></div>
<div style="left:1121px;top:594px;width:1px;height:37px;background:#d3d8de"></div>
<div style="left:1252px;top:594px;width:1px;height:37px;background:#d3d8de"></div>
<div style="left:1383px;top:594px;width:1px;height:37px;background:#d3d8de"></div>
<div style="left:1646px;top:594px;width:1px;height:37px;background:#d3d8de"></div>
<div style="left:1777px;top:594px;width:1px;height:37px;background:#d3d8de"></div>
<div style="left:979px;top:594px;width:1px;height:37px;background:#eef0f2"></div>
<div style="left:1026px;top:594px;width:1px;height:37px;background:#eef0f2"></div>
<div style="left:1073px;top:594px;width:1px;height:37px;background:#eef0f2"></div>
<div style="left:702px;top:613px;width:1px;height:18px;background:#eef0f2"></div>
<svg style="position:absolute;left:525px;top:602px" width="10" height="4" viewBox="0 0 10 4"><rect x="0.5" y="0.3" width="9" height="3.4" rx="1.7" fill="#a8c0d4" stroke="#5a7a94" stroke-width="0.8"/></svg>
<div style="left:543px;top:597.69px;font-size:11px;line-height:13px;color:#000;">Площадь2013</div>
<div style="left:674px;top:597.69px;font-size:11px;line-height:13px;color:#000;">Площадь2013</div>
<svg style="position:absolute;left:680px;top:616px" width="13" height="13" viewBox="0 0 13 13"><rect x="0.6" y="0.6" width="11.8" height="11.8" rx="2.4" fill="#fff" stroke="#958a68" stroke-width="1.15"/><path d="M3 6.5 L5.5 9 L10 4" stroke="#333" stroke-width="2" fill="none"/></svg>
<div style="left:707px;top:616.69px;font-size:11px;line-height:13px;color:#000;">Площадь2013</div>
<svg style="position:absolute;left:950px;top:597px" width="13" height="13" viewBox="0 0 13 13"><rect x="0.6" y="0.6" width="11.8" height="11.8" rx="2.4" fill="#fff" stroke="#958a68" stroke-width="1.15"/></svg>
<svg style="position:absolute;left:950px;top:616px" width="13" height="13" viewBox="0 0 13 13"><rect x="0.6" y="0.6" width="11.8" height="11.8" rx="2.4" fill="#fff" stroke="#958a68" stroke-width="1.15"/></svg>
<svg style="position:absolute;left:997px;top:597px" width="13" height="13" viewBox="0 0 13 13"><rect x="0.6" y="0.6" width="11.8" height="11.8" rx="2.4" fill="#fff" stroke="#958a68" stroke-width="1.15"/></svg>
<svg style="position:absolute;left:997px;top:616px" width="13" height="13" viewBox="0 0 13 13"><rect x="0.6" y="0.6" width="11.8" height="11.8" rx="2.4" fill="#fff" stroke="#958a68" stroke-width="1.15"/></svg>
<svg style="position:absolute;left:1044px;top:597px" width="13" height="13" viewBox="0 0 13 13"><rect x="0.6" y="0.6" width="11.8" height="11.8" rx="2.4" fill="#fff" stroke="#958a68" stroke-width="1.15"/></svg>
<svg style="position:absolute;left:1044px;top:616px" width="13" height="13" viewBox="0 0 13 13"><rect x="0.6" y="0.6" width="11.8" height="11.8" rx="2.4" fill="#fff" stroke="#958a68" stroke-width="1.15"/></svg>
<svg style="position:absolute;left:1091px;top:597px" width="13" height="13" viewBox="0 0 13 13"><rect x="0.6" y="0.6" width="11.8" height="11.8" rx="2.4" fill="#fff" stroke="#958a68" stroke-width="1.15"/></svg>
<svg style="position:absolute;left:1091px;top:616px" width="13" height="13" viewBox="0 0 13 13"><rect x="0.6" y="0.6" width="11.8" height="11.8" rx="2.4" fill="#fff" stroke="#958a68" stroke-width="1.15"/></svg>
<div style="left:1782px;top:597.69px;font-size:11px;line-height:13px;color:#000;">Формат</div>
<div style="left:669px;top:650px;width:263px;height:1px;background:#ececec"></div>
<div style="left:932px;top:650px;width:189px;height:1px;background:#ececec"></div>
<div style="left:1252px;top:650px;width:131px;height:1px;background:#ececec"></div>
<div style="left:1383px;top:650px;width:263px;height:1px;background:#ececec"></div>
<div style="left:1646px;top:650px;width:131px;height:1px;background:#ececec"></div>
<div style="left:1777px;top:650px;width:133px;height:1px;background:#ececec"></div>
<div style="left:518px;top:669px;width:1392px;height:1px;background:#d3d8de"></div>
<div style="left:538px;top:632px;width:1px;height:37px;background:#d3d8de"></div>
<div style="left:669px;top:632px;width:1px;height:37px;background:#d3d8de"></div>
<div style="left:932px;top:632px;width:1px;height:37px;background:#d3d8de"></div>
<div style="left:1121px;top:632px;width:1px;height:37px;background:#d3d8de"></div>
<div style="left:1252px;top:632px;width:1px;height:37px;background:#d3d8de"></div>
<div style="left:1383px;top:632px;width:1px;height:37px;background:#d3d8de"></div>
<div style="left:1646px;top:632px;width:1px;height:37px;background:#d3d8de"></div>
<div style="left:1777px;top:632px;width:1px;height:37px;background:#d3d8de"></div>
<div style="left:979px;top:632px;width:1px;height:37px;background:#eef0f2"></div>
<div style="left:1026px;top:632px;width:1px;height:37px;background:#eef0f2"></div>
<div style="left:1073px;top:632px;width:1px;height:37px;background:#eef0f2"></div>
<div style="left:702px;top:651px;width:1px;height:18px;background:#eef0f2"></div>
<svg style="position:absolute;left:525px;top:640px" width="10" height="4" viewBox="0 0 10 4"><rect x="0.5" y="0.3" width="9" height="3.4" rx="1.7" fill="#a8c0d4" stroke="#5a7a94" stroke-width="0.8"/></svg>
<div style="left:543px;top:635.69px;font-size:11px;line-height:13px;color:#000;">Урожайность2013</div>
<div style="left:674px;top:635.69px;font-size:11px;line-height:13px;color:#000;">Урожайность2013</div>
<svg style="position:absolute;left:680px;top:654px" width="13" height="13" viewBox="0 0 13 13"><rect x="0.6" y="0.6" width="11.8" height="11.8" rx="2.4" fill="#fff" stroke="#958a68" stroke-width="1.15"/><path d="M3 6.5 L5.5 9 L10 4" stroke="#333" stroke-width="2" fill="none"/></svg>
<div style="left:707px;top:654.69px;font-size:11px;line-height:13px;color:#000;">Урожайность2013</div>
<svg style="position:absolute;left:950px;top:635px" width="13" height="13" viewBox="0 0 13 13"><rect x="0.6" y="0.6" width="11.8" height="11.8" rx="2.4" fill="#fff" stroke="#958a68" stroke-width="1.15"/></svg>
<svg style="position:absolute;left:950px;top:654px" width="13" height="13" viewBox="0 0 13 13"><rect x="0.6" y="0.6" width="11.8" height="11.8" rx="2.4" fill="#fff" stroke="#958a68" stroke-width="1.15"/></svg>
<svg style="position:absolute;left:997px;top:635px" width="13" height="13" viewBox="0 0 13 13"><rect x="0.6" y="0.6" width="11.8" height="11.8" rx="2.4" fill="#fff" stroke="#958a68" stroke-width="1.15"/></svg>
<svg style="position:absolute;left:997px;top:654px" width="13" height="13" viewBox="0 0 13 13"><rect x="0.6" y="0.6" width="11.8" height="11.8" rx="2.4" fill="#fff" stroke="#958a68" stroke-width="1.15"/></svg>
<svg style="position:absolute;left:1044px;top:635px" width="13" height="13" viewBox="0 0 13 13"><rect x="0.6" y="0.6" width="11.8" height="11.8" rx="2.4" fill="#fff" stroke="#958a68" stroke-width="1.15"/></svg>
<svg style="position:absolute;left:1044px;top:654px" width="13" height="13" viewBox="0 0 13 13"><rect x="0.6" y="0.6" width="11.8" height="11.8" rx="2.4" fill="#fff" stroke="#958a68" stroke-width="1.15"/></svg>
<svg style="position:absolute;left:1091px;top:635px" width="13" height="13" viewBox="0 0 13 13"><rect x="0.6" y="0.6" width="11.8" height="11.8" rx="2.4" fill="#fff" stroke="#958a68" stroke-width="1.15"/></svg>
<svg style="position:absolute;left:1091px;top:654px" width="13" height="13" viewBox="0 0 13 13"><rect x="0.6" y="0.6" width="11.8" height="11.8" rx="2.4" fill="#fff" stroke="#958a68" stroke-width="1.15"/></svg>
<div style="left:1782px;top:635.69px;font-size:11px;line-height:13px;color:#000;">Формат</div>
<div style="left:669px;top:688px;width:263px;height:1px;background:#ececec"></div>
<div style="left:932px;top:688px;width:189px;height:1px;background:#ececec"></div>
<div style="left:1252px;top:688px;width:131px;height:1px;background:#ececec"></div>
<div style="left:1383px;top:688px;width:263px;height:1px;background:#ececec"></div>
<div style="left:1646px;top:688px;width:131px;height:1px;background:#ececec"></div>
<div style="left:1777px;top:688px;width:133px;height:1px;background:#ececec"></div>
<div style="left:518px;top:707px;width:1392px;height:1px;background:#d3d8de"></div>
<div style="left:538px;top:670px;width:1px;height:37px;background:#d3d8de"></div>
<div style="left:669px;top:670px;width:1px;height:37px;background:#d3d8de"></div>
<div style="left:932px;top:670px;width:1px;height:37px;background:#d3d8de"></div>
<div style="left:1121px;top:670px;width:1px;height:37px;background:#d3d8de"></div>
<div style="left:1252px;top:670px;width:1px;height:37px;background:#d3d8de"></div>
<div style="left:1383px;top:670px;width:1px;height:37px;background:#d3d8de"></div>
<div style="left:1646px;top:670px;width:1px;height:37px;background:#d3d8de"></div>
<div style="left:1777px;top:670px;width:1px;height:37px;background:#d3d8de"></div>
<div style="left:979px;top:670px;width:1px;height:37px;background:#eef0f2"></div>
<div style="left:1026px;top:670px;width:1px;height:37px;background:#eef0f2"></div>
<div style="left:1073px;top:670px;width:1px;height:37px;background:#eef0f2"></div>
<div style="left:702px;top:689px;width:1px;height:18px;background:#eef0f2"></div>
<svg style="position:absolute;left:525px;top:678px" width="10" height="4" viewBox="0 0 10 4"><rect x="0.5" y="0.3" width="9" height="3.4" rx="1.7" fill="#a8c0d4" stroke="#5a7a94" stroke-width="0.8"/></svg>
<div style="left:543px;top:673.69px;font-size:11px;line-height:13px;color:#000;">НоменклатурнаяГруп...</div>
<div style="left:674px;top:673.69px;font-size:11px;line-height:13px;color:#000;">НоменклатурнаяГруппа2013</div>
<svg style="position:absolute;left:680px;top:692px" width="13" height="13" viewBox="0 0 13 13"><rect x="0.6" y="0.6" width="11.8" height="11.8" rx="2.4" fill="#fff" stroke="#958a68" stroke-width="1.15"/><path d="M3 6.5 L5.5 9 L10 4" stroke="#333" stroke-width="2" fill="none"/></svg>
<div style="left:707px;top:692.69px;font-size:11px;line-height:13px;color:#000;">Номенклатурная группа2013</div>
<svg style="position:absolute;left:950px;top:673px" width="13" height="13" viewBox="0 0 13 13"><rect x="0.6" y="0.6" width="11.8" height="11.8" rx="2.4" fill="#fff" stroke="#958a68" stroke-width="1.15"/></svg>
<svg style="position:absolute;left:950px;top:692px" width="13" height="13" viewBox="0 0 13 13"><rect x="0.6" y="0.6" width="11.8" height="11.8" rx="2.4" fill="#fff" stroke="#958a68" stroke-width="1.15"/></svg>
<svg style="position:absolute;left:997px;top:673px" width="13" height="13" viewBox="0 0 13 13"><rect x="0.6" y="0.6" width="11.8" height="11.8" rx="2.4" fill="#fff" stroke="#958a68" stroke-width="1.15"/></svg>
<svg style="position:absolute;left:997px;top:692px" width="13" height="13" viewBox="0 0 13 13"><rect x="0.6" y="0.6" width="11.8" height="11.8" rx="2.4" fill="#fff" stroke="#958a68" stroke-width="1.15"/></svg>
<svg style="position:absolute;left:1044px;top:673px" width="13" height="13" viewBox="0 0 13 13"><rect x="0.6" y="0.6" width="11.8" height="11.8" rx="2.4" fill="#fff" stroke="#958a68" stroke-width="1.15"/></svg>
<svg style="position:absolute;left:1044px;top:692px" width="13" height="13" viewBox="0 0 13 13"><rect x="0.6" y="0.6" width="11.8" height="11.8" rx="2.4" fill="#fff" stroke="#958a68" stroke-width="1.15"/></svg>
<svg style="position:absolute;left:1091px;top:673px" width="13" height="13" viewBox="0 0 13 13"><rect x="0.6" y="0.6" width="11.8" height="11.8" rx="2.4" fill="#fff" stroke="#958a68" stroke-width="1.15"/></svg>
<svg style="position:absolute;left:1091px;top:692px" width="13" height="13" viewBox="0 0 13 13"><rect x="0.6" y="0.6" width="11.8" height="11.8" rx="2.4" fill="#fff" stroke="#958a68" stroke-width="1.15"/></svg>
<div style="left:669px;top:726px;width:263px;height:1px;background:#ececec"></div>
<div style="left:932px;top:726px;width:189px;height:1px;background:#ececec"></div>
<div style="left:1252px;top:726px;width:131px;height:1px;background:#ececec"></div>
<div style="left:1383px;top:726px;width:263px;height:1px;background:#ececec"></div>
<div style="left:1646px;top:726px;width:131px;height:1px;background:#ececec"></div>
<div style="left:1777px;top:726px;width:133px;height:1px;background:#ececec"></div>
<div style="left:518px;top:745px;width:1392px;height:1px;background:#d3d8de"></div>
<div style="left:538px;top:708px;width:1px;height:37px;background:#d3d8de"></div>
<div style="left:669px;top:708px;width:1px;height:37px;background:#d3d8de"></div>
<div style="left:932px;top:708px;width:1px;height:37px;background:#d3d8de"></div>
<div style="left:1121px;top:708px;width:1px;height:37px;background:#d3d8de"></div>
<div style="left:1252px;top:708px;width:1px;height:37px;background:#d3d8de"></div>
<div style="left:1383px;top:708px;width:1px;height:37px;background:#d3d8de"></div>
<div style="left:1646px;top:708px;width:1px;height:37px;background:#d3d8de"></div>
<div style="left:1777px;top:708px;width:1px;height:37px;background:#d3d8de"></div>
<div style="left:979px;top:708px;width:1px;height:37px;background:#eef0f2"></div>
<div style="left:1026px;top:708px;width:1px;height:37px;background:#eef0f2"></div>
<div style="left:1073px;top:708px;width:1px;height:37px;background:#eef0f2"></div>
<div style="left:702px;top:727px;width:1px;height:18px;background:#eef0f2"></div>
<svg style="position:absolute;left:525px;top:716px" width="10" height="4" viewBox="0 0 10 4"><rect x="0.5" y="0.3" width="9" height="3.4" rx="1.7" fill="#a8c0d4" stroke="#5a7a94" stroke-width="0.8"/></svg>
<div style="left:543px;top:711.69px;font-size:11px;line-height:13px;color:#000;">НомерМесяца2013</div>
<div style="left:674px;top:711.69px;font-size:11px;line-height:13px;color:#000;">НомерМесяца2013</div>
<svg style="position:absolute;left:680px;top:730px" width="13" height="13" viewBox="0 0 13 13"><rect x="0.6" y="0.6" width="11.8" height="11.8" rx="2.4" fill="#fff" stroke="#958a68" stroke-width="1.15"/><path d="M3 6.5 L5.5 9 L10 4" stroke="#333" stroke-width="2" fill="none"/></svg>
<div style="left:707px;top:730.69px;font-size:11px;line-height:13px;color:#000;">Номер месяца2013</div>
<svg style="position:absolute;left:950px;top:711px" width="13" height="13" viewBox="0 0 13 13"><rect x="0.6" y="0.6" width="11.8" height="11.8" rx="2.4" fill="#fff" stroke="#958a68" stroke-width="1.15"/></svg>
<svg style="position:absolute;left:950px;top:730px" width="13" height="13" viewBox="0 0 13 13"><rect x="0.6" y="0.6" width="11.8" height="11.8" rx="2.4" fill="#fff" stroke="#958a68" stroke-width="1.15"/></svg>
<svg style="position:absolute;left:997px;top:711px" width="13" height="13" viewBox="0 0 13 13"><rect x="0.6" y="0.6" width="11.8" height="11.8" rx="2.4" fill="#fff" stroke="#958a68" stroke-width="1.15"/></svg>
<svg style="position:absolute;left:997px;top:730px" width="13" height="13" viewBox="0 0 13 13"><rect x="0.6" y="0.6" width="11.8" height="11.8" rx="2.4" fill="#fff" stroke="#958a68" stroke-width="1.15"/></svg>
<svg style="position:absolute;left:1044px;top:711px" width="13" height="13" viewBox="0 0 13 13"><rect x="0.6" y="0.6" width="11.8" height="11.8" rx="2.4" fill="#fff" stroke="#958a68" stroke-width="1.15"/></svg>
<svg style="position:absolute;left:1044px;top:730px" width="13" height="13" viewBox="0 0 13 13"><rect x="0.6" y="0.6" width="11.8" height="11.8" rx="2.4" fill="#fff" stroke="#958a68" stroke-width="1.15"/></svg>
<svg style="position:absolute;left:1091px;top:711px" width="13" height="13" viewBox="0 0 13 13"><rect x="0.6" y="0.6" width="11.8" height="11.8" rx="2.4" fill="#fff" stroke="#958a68" stroke-width="1.15"/></svg>
<svg style="position:absolute;left:1091px;top:730px" width="13" height="13" viewBox="0 0 13 13"><rect x="0.6" y="0.6" width="11.8" height="11.8" rx="2.4" fill="#fff" stroke="#958a68" stroke-width="1.15"/></svg>
<div style="left:1126px;top:711.69px;font-size:11px;line-height:13px;color:#000;">NULL</div>
<div style="left:1782px;top:711.69px;font-size:11px;line-height:13px;color:#000;">Горизонтальное поло...</div>
<div style="left:669px;top:764px;width:263px;height:1px;background:#ececec"></div>
<div style="left:932px;top:764px;width:189px;height:1px;background:#ececec"></div>
<div style="left:1252px;top:764px;width:131px;height:1px;background:#ececec"></div>
<div style="left:1383px;top:764px;width:263px;height:1px;background:#ececec"></div>
<div style="left:1646px;top:764px;width:131px;height:1px;background:#ececec"></div>
<div style="left:1777px;top:764px;width:133px;height:1px;background:#ececec"></div>
<div style="left:518px;top:783px;width:1392px;height:1px;background:#d3d8de"></div>
<div style="left:538px;top:746px;width:1px;height:37px;background:#d3d8de"></div>
<div style="left:669px;top:746px;width:1px;height:37px;background:#d3d8de"></div>
<div style="left:932px;top:746px;width:1px;height:37px;background:#d3d8de"></div>
<div style="left:1121px;top:746px;width:1px;height:37px;background:#d3d8de"></div>
<div style="left:1252px;top:746px;width:1px;height:37px;background:#d3d8de"></div>
<div style="left:1383px;top:746px;width:1px;height:37px;background:#d3d8de"></div>
<div style="left:1646px;top:746px;width:1px;height:37px;background:#d3d8de"></div>
<div style="left:1777px;top:746px;width:1px;height:37px;background:#d3d8de"></div>
<div style="left:979px;top:746px;width:1px;height:37px;background:#eef0f2"></div>
<div style="left:1026px;top:746px;width:1px;height:37px;background:#eef0f2"></div>
<div style="left:1073px;top:746px;width:1px;height:37px;background:#eef0f2"></div>
<div style="left:702px;top:765px;width:1px;height:18px;background:#eef0f2"></div>
<svg style="position:absolute;left:525px;top:754px" width="10" height="4" viewBox="0 0 10 4"><rect x="0.5" y="0.3" width="9" height="3.4" rx="1.7" fill="#a8c0d4" stroke="#5a7a94" stroke-width="0.8"/></svg>
<div style="left:543px;top:749.69px;font-size:11px;line-height:13px;color:#000;">Подразделение2013</div>
<div style="left:674px;top:749.69px;font-size:11px;line-height:13px;color:#000;">Подразделение2013</div>
<svg style="position:absolute;left:680px;top:768px" width="13" height="13" viewBox="0 0 13 13"><rect x="0.6" y="0.6" width="11.8" height="11.8" rx="2.4" fill="#fff" stroke="#958a68" stroke-width="1.15"/><path d="M3 6.5 L5.5 9 L10 4" stroke="#333" stroke-width="2" fill="none"/></svg>
<div style="left:707px;top:768.69px;font-size:11px;line-height:13px;color:#000;">Подразделение2013</div>
<svg style="position:absolute;left:950px;top:749px" width="13" height="13" viewBox="0 0 13 13"><rect x="0.6" y="0.6" width="11.8" height="11.8" rx="2.4" fill="#fff" stroke="#958a68" stroke-width="1.15"/></svg>
<svg style="position:absolute;left:950px;top:768px" width="13" height="13" viewBox="0 0 13 13"><rect x="0.6" y="0.6" width="11.8" height="11.8" rx="2.4" fill="#fff" stroke="#958a68" stroke-width="1.15"/></svg>
<svg style="position:absolute;left:997px;top:749px" width="13" height="13" viewBox="0 0 13 13"><rect x="0.6" y="0.6" width="11.8" height="11.8" rx="2.4" fill="#fff" stroke="#958a68" stroke-width="1.15"/></svg>
<svg style="position:absolute;left:997px;top:768px" width="13" height="13" viewBox="0 0 13 13"><rect x="0.6" y="0.6" width="11.8" height="11.8" rx="2.4" fill="#fff" stroke="#958a68" stroke-width="1.15"/></svg>
<svg style="position:absolute;left:1044px;top:749px" width="13" height="13" viewBox="0 0 13 13"><rect x="0.6" y="0.6" width="11.8" height="11.8" rx="2.4" fill="#fff" stroke="#958a68" stroke-width="1.15"/></svg>
<svg style="position:absolute;left:1044px;top:768px" width="13" height="13" viewBox="0 0 13 13"><rect x="0.6" y="0.6" width="11.8" height="11.8" rx="2.4" fill="#fff" stroke="#958a68" stroke-width="1.15"/></svg>
<svg style="position:absolute;left:1091px;top:749px" width="13" height="13" viewBox="0 0 13 13"><rect x="0.6" y="0.6" width="11.8" height="11.8" rx="2.4" fill="#fff" stroke="#958a68" stroke-width="1.15"/></svg>
<svg style="position:absolute;left:1091px;top:768px" width="13" height="13" viewBox="0 0 13 13"><rect x="0.6" y="0.6" width="11.8" height="11.8" rx="2.4" fill="#fff" stroke="#958a68" stroke-width="1.15"/></svg>
<div style="left:669px;top:802px;width:263px;height:1px;background:#ececec"></div>
<div style="left:932px;top:802px;width:189px;height:1px;background:#ececec"></div>
<div style="left:1252px;top:802px;width:131px;height:1px;background:#ececec"></div>
<div style="left:1383px;top:802px;width:263px;height:1px;background:#ececec"></div>
<div style="left:1646px;top:802px;width:131px;height:1px;background:#ececec"></div>
<div style="left:1777px;top:802px;width:133px;height:1px;background:#ececec"></div>
<div style="left:518px;top:821px;width:1392px;height:1px;background:#d3d8de"></div>
<div style="left:538px;top:784px;width:1px;height:37px;background:#d3d8de"></div>
<div style="left:669px;top:784px;width:1px;height:37px;background:#d3d8de"></div>
<div style="left:932px;top:784px;width:1px;height:37px;background:#d3d8de"></div>
<div style="left:1121px;top:784px;width:1px;height:37px;background:#d3d8de"></div>
<div style="left:1252px;top:784px;width:1px;height:37px;background:#d3d8de"></div>
<div style="left:1383px;top:784px;width:1px;height:37px;background:#d3d8de"></div>
<div style="left:1646px;top:784px;width:1px;height:37px;background:#d3d8de"></div>
<div style="left:1777px;top:784px;width:1px;height:37px;background:#d3d8de"></div>
<div style="left:979px;top:784px;width:1px;height:37px;background:#eef0f2"></div>
<div style="left:1026px;top:784px;width:1px;height:37px;background:#eef0f2"></div>
<div style="left:1073px;top:784px;width:1px;height:37px;background:#eef0f2"></div>
<div style="left:702px;top:803px;width:1px;height:18px;background:#eef0f2"></div>
<svg style="position:absolute;left:525px;top:792px" width="10" height="4" viewBox="0 0 10 4"><rect x="0.5" y="0.3" width="9" height="3.4" rx="1.7" fill="#a8c0d4" stroke="#5a7a94" stroke-width="0.8"/></svg>
<div style="left:543px;top:787.69px;font-size:11px;line-height:13px;color:#000;">Поле2013</div>
<div style="left:674px;top:787.69px;font-size:11px;line-height:13px;color:#000;">Поле2013</div>
<svg style="position:absolute;left:680px;top:806px" width="13" height="13" viewBox="0 0 13 13"><rect x="0.6" y="0.6" width="11.8" height="11.8" rx="2.4" fill="#fff" stroke="#958a68" stroke-width="1.15"/><path d="M3 6.5 L5.5 9 L10 4" stroke="#333" stroke-width="2" fill="none"/></svg>
<div style="left:707px;top:806.69px;font-size:11px;line-height:13px;color:#000;">Поле2013</div>
<svg style="position:absolute;left:950px;top:787px" width="13" height="13" viewBox="0 0 13 13"><rect x="0.6" y="0.6" width="11.8" height="11.8" rx="2.4" fill="#fff" stroke="#958a68" stroke-width="1.15"/></svg>
<svg style="position:absolute;left:950px;top:806px" width="13" height="13" viewBox="0 0 13 13"><rect x="0.6" y="0.6" width="11.8" height="11.8" rx="2.4" fill="#fff" stroke="#958a68" stroke-width="1.15"/></svg>
<svg style="position:absolute;left:997px;top:787px" width="13" height="13" viewBox="0 0 13 13"><rect x="0.6" y="0.6" width="11.8" height="11.8" rx="2.4" fill="#fff" stroke="#958a68" stroke-width="1.15"/></svg>
<svg style="position:absolute;left:997px;top:806px" width="13" height="13" viewBox="0 0 13 13"><rect x="0.6" y="0.6" width="11.8" height="11.8" rx="2.4" fill="#fff" stroke="#958a68" stroke-width="1.15"/></svg>
<svg style="position:absolute;left:1044px;top:787px" width="13" height="13" viewBox="0 0 13 13"><rect x="0.6" y="0.6" width="11.8" height="11.8" rx="2.4" fill="#fff" stroke="#958a68" stroke-width="1.15"/></svg>
<svg style="position:absolute;left:1044px;top:806px" width="13" height="13" viewBox="0 0 13 13"><rect x="0.6" y="0.6" width="11.8" height="11.8" rx="2.4" fill="#fff" stroke="#958a68" stroke-width="1.15"/></svg>
<svg style="position:absolute;left:1091px;top:787px" width="13" height="13" viewBox="0 0 13 13"><rect x="0.6" y="0.6" width="11.8" height="11.8" rx="2.4" fill="#fff" stroke="#958a68" stroke-width="1.15"/></svg>
<svg style="position:absolute;left:1091px;top:806px" width="13" height="13" viewBox="0 0 13 13"><rect x="0.6" y="0.6" width="11.8" height="11.8" rx="2.4" fill="#fff" stroke="#958a68" stroke-width="1.15"/></svg>
<div style="left:669px;top:840px;width:263px;height:1px;background:#ececec"></div>
<div style="left:932px;top:840px;width:189px;height:1px;background:#ececec"></div>
<div style="left:1252px;top:840px;width:131px;height:1px;background:#ececec"></div>
<div style="left:1383px;top:840px;width:263px;height:1px;background:#ececec"></div>
<div style="left:1646px;top:840px;width:131px;height:1px;background:#ececec"></div>
<div style="left:1777px;top:840px;width:133px;height:1px;background:#ececec"></div>
<div style="left:518px;top:859px;width:1392px;height:1px;background:#d3d8de"></div>
<div style="left:538px;top:822px;width:1px;height:37px;background:#d3d8de"></div>
<div style="left:669px;top:822px;width:1px;height:37px;background:#d3d8de"></div>
<div style="left:932px;top:822px;width:1px;height:37px;background:#d3d8de"></div>
<div style="left:1121px;top:822px;width:1px;height:37px;background:#d3d8de"></div>
<div style="left:1252px;top:822px;width:1px;height:37px;background:#d3d8de"></div>
<div style="left:1383px;top:822px;width:1px;height:37px;background:#d3d8de"></div>
<div style="left:1646px;top:822px;width:1px;height:37px;background:#d3d8de"></div>
<div style="left:1777px;top:822px;width:1px;height:37px;background:#d3d8de"></div>
<div style="left:979px;top:822px;width:1px;height:37px;background:#eef0f2"></div>
<div style="left:1026px;top:822px;width:1px;height:37px;background:#eef0f2"></div>
<div style="left:1073px;top:822px;width:1px;height:37px;background:#eef0f2"></div>
<div style="left:702px;top:841px;width:1px;height:18px;background:#eef0f2"></div>
<svg style="position:absolute;left:525px;top:830px" width="10" height="4" viewBox="0 0 10 4"><rect x="0.5" y="0.3" width="9" height="3.4" rx="1.7" fill="#a8c0d4" stroke="#5a7a94" stroke-width="0.8"/></svg>
<div style="left:543px;top:825.69px;font-size:11px;line-height:13px;color:#000;">Продукция2013</div>
<div style="left:674px;top:825.69px;font-size:11px;line-height:13px;color:#000;">Продукция2013</div>
<svg style="position:absolute;left:680px;top:844px" width="13" height="13" viewBox="0 0 13 13"><rect x="0.6" y="0.6" width="11.8" height="11.8" rx="2.4" fill="#fff" stroke="#958a68" stroke-width="1.15"/><path d="M3 6.5 L5.5 9 L10 4" stroke="#333" stroke-width="2" fill="none"/></svg>
<div style="left:707px;top:844.69px;font-size:11px;line-height:13px;color:#000;">Продукция2013</div>
<svg style="position:absolute;left:950px;top:825px" width="13" height="13" viewBox="0 0 13 13"><rect x="0.6" y="0.6" width="11.8" height="11.8" rx="2.4" fill="#fff" stroke="#958a68" stroke-width="1.15"/></svg>
<svg style="position:absolute;left:950px;top:844px" width="13" height="13" viewBox="0 0 13 13"><rect x="0.6" y="0.6" width="11.8" height="11.8" rx="2.4" fill="#fff" stroke="#958a68" stroke-width="1.15"/></svg>
<svg style="position:absolute;left:997px;top:825px" width="13" height="13" viewBox="0 0 13 13"><rect x="0.6" y="0.6" width="11.8" height="11.8" rx="2.4" fill="#fff" stroke="#958a68" stroke-width="1.15"/></svg>
<svg style="position:absolute;left:997px;top:844px" width="13" height="13" viewBox="0 0 13 13"><rect x="0.6" y="0.6" width="11.8" height="11.8" rx="2.4" fill="#fff" stroke="#958a68" stroke-width="1.15"/></svg>
<svg style="position:absolute;left:1044px;top:825px" width="13" height="13" viewBox="0 0 13 13"><rect x="0.6" y="0.6" width="11.8" height="11.8" rx="2.4" fill="#fff" stroke="#958a68" stroke-width="1.15"/></svg>
<svg style="position:absolute;left:1044px;top:844px" width="13" height="13" viewBox="0 0 13 13"><rect x="0.6" y="0.6" width="11.8" height="11.8" rx="2.4" fill="#fff" stroke="#958a68" stroke-width="1.15"/></svg>
<svg style="position:absolute;left:1091px;top:825px" width="13" height="13" viewBox="0 0 13 13"><rect x="0.6" y="0.6" width="11.8" height="11.8" rx="2.4" fill="#fff" stroke="#958a68" stroke-width="1.15"/></svg>
<svg style="position:absolute;left:1091px;top:844px" width="13" height="13" viewBox="0 0 13 13"><rect x="0.6" y="0.6" width="11.8" height="11.8" rx="2.4" fill="#fff" stroke="#958a68" stroke-width="1.15"/></svg>
<div style="left:0px;top:1005px;width:1920px;height:3px;background:#f4f0dc"></div>
<div style="left:1px;top:1008px;width:172px;height:20px;background:#b4b4b4;border:1px solid #d8d0b4"></div>
<div style="left:174px;top:1008px;width:172px;height:20px;background:#b4b4b4;border:1px solid #d8d0b4"></div>
<svg style="position:absolute;left:4px;top:1010px" width="14" height="16" viewBox="0 0 14 16"><path d="M2.5 1.5 H9 L12.5 5 V15.5 H2.5 Z" fill="#f4f8fc" stroke="#8aa0b8"/><path d="M0.5 0.5 H7 L10.5 4 V14.5 H0.5 Z" fill="#fff" stroke="#8aa0b8" opacity="0.7"/></svg>
<div style="left:20px;top:1013.69px;font-size:11px;line-height:13px;color:#222;">...\ВыпускСКДсНУЛЯ2014...</div>
<svg style="position:absolute;left:176px;top:1010px" width="15" height="16" viewBox="0 0 15 16"><rect x="3.5" y="4.5" width="10" height="10" fill="#f0f4f8" stroke="#6a8aaa"/><path d="M0.5 0.5 H6 V6 H0.5 Z" fill="#e8b830" stroke="#c89020"/></svg>
<div style="left:193px;top:1013.69px;font-size:11px;line-height:13px;color:#222;">C:\Users...: ВыпускПродукции</div>
<div style="left:0px;top:1030px;width:1920px;height:1px;background:#dcd8c2"></div>
<div style="left:0px;top:1048px;width:1920px;height:1px;background:#dcd8c2"></div>
<div style="left:1394px;top:1031px;width:1px;height:17px;background:#dcd8c2"></div>
<div style="left:4px;top:1033.69px;font-size:11px;line-height:13px;color:#222;">Для получения подсказки нажмите F1</div>
<div style="left:1820px;top:1032px;width:1px;height:16px;background:#d6ceb0"></div>
<div style="left:1855px;top:1032px;width:1px;height:16px;background:#d6ceb0"></div>
<div style="left:1893px;top:1032px;width:1px;height:16px;background:#d6ceb0"></div>
<div style="left:1826px;top:1033.69px;font-size:11px;line-height:13px;color:#a89060;">CAP</div>
<div style="left:1861px;top:1033.69px;font-size:11px;line-height:13px;color:#222;">NUM</div>
<div style="left:1898px;top:1033.69px;font-size:11px;line-height:13px;color:#222;">ru</div>
<svg style="position:absolute;left:1911px;top:1037px" width="6" height="4" viewBox="0 0 6 4"><path d="M0 0 H6 L3 3.5 Z" fill="#222"/></svg>
<div style="left:0px;top:1050px;width:1920px;height:30px;background:linear-gradient(180deg,#8ca1b8 0%,#869bb2 40%,#8399b0 100%)"></div>
<div style="left:0px;top:1050px;width:1920px;height:30px;background:linear-gradient(110deg,rgba(255,255,255,0) 0%,rgba(255,255,255,0.06) 14%,rgba(255,255,255,0) 18%,rgba(255,255,255,0) 28%,rgba(255,255,255,0.07) 31%,rgba(255,255,255,0) 36%,rgba(255,255,255,0) 100%)"></div>
<div style="left:0px;top:1050px;width:1920px;height:1px;background:#34404c"></div>
<div style="left:0px;top:1051px;width:1920px;height:1px;background:#c2d4e6"></div>
<svg style="position:absolute;left:8px;top:1044px" width="38" height="36" viewBox="0 0 38 36"><defs><radialGradient id="orb" cx="0.5" cy="0.55" r="0.55"><stop offset="0" stop-color="#3a8ad0"/><stop offset="0.75" stop-color="#1a4e8a"/><stop offset="1" stop-color="#0e2e58"/></radialGradient><radialGradient id="orbg" cx="0.5" cy="1" r="0.5"><stop offset="0" stop-color="#60f0ff" stop-opacity="0.9"/><stop offset="1" stop-color="#60f0ff" stop-opacity="0"/></radialGradient><linearGradient id="orbh" x1="0" y1="0" x2="0" y2="1"><stop offset="0" stop-color="#fff" stop-opacity="0.55"/><stop offset="1" stop-color="#fff" stop-opacity="0.05"/></linearGradient></defs><circle cx="19" cy="19" r="17.5" fill="url(#orb)" stroke="#1a3050"/><ellipse cx="19" cy="32" rx="10" ry="5" fill="url(#orbg)"/><path d="M10.5 12.5 Q13.5 10.5 17.5 12 L16.5 17.5 Q12.8 16 9.5 17.5 Z" fill="#f05a28"/><path d="M19 12 Q22.5 13.5 26.5 12 L25.5 17.5 Q21.8 19 18 17.5 Z" fill="#8ac43a"/><path d="M9.5 19 Q12.5 17.5 16.5 19 L15.5 24.5 Q12 23 8.5 24.5 Z" fill="#2a9ae0"/><path d="M18 19 Q21.5 20.5 25.5 19 L24.5 24.5 Q20.8 26 17 24.5 Z" fill="#f8c020"/><ellipse cx="19" cy="11" rx="13" ry="9" fill="url(#orbh)"/></svg>
<svg style="position:absolute;left:73px;top:1056px" width="17" height="17" viewBox="0 0 17 17"><path d="M2 9 A6.5 6.5 0 1 1 15 9 H4 A4.5 4.5 0 0 0 13 12" fill="none" stroke="#2a8ad8" stroke-width="2.2"/><path d="M1 15 C3 6 12 1 16 2" fill="none" stroke="#f0c020" stroke-width="1.4"/></svg>
<svg style="position:absolute;left:119px;top:1056px" width="17" height="17" viewBox="0 0 17 17"><rect x="0.5" y="3.5" width="16" height="12" rx="1" fill="#f0d890" stroke="#c8a850"/><rect x="0.5" y="1.5" width="7" height="3" fill="#f0d890" stroke="#c8a850"/><path d="M4 15.5 V10 H13 V15.5" fill="none" stroke="#3a8ad0" stroke-width="2"/></svg>
<svg style="position:absolute;left:165px;top:1057px" width="17" height="16" viewBox="0 0 17 16"><rect x="0.5" y="0.5" width="16" height="15" fill="#d8e8f4" stroke="#8ab0d0"/><circle cx="8.5" cy="8" r="6" fill="#f08a20"/><path d="M6.5 4.8 L11.5 8 L6.5 11.2 Z" fill="#fff"/></svg>
<svg style="position:absolute;left:211px;top:1057px" width="17" height="17" viewBox="0 0 17 17"><circle cx="8.5" cy="8.5" r="7.5" fill="#30b040"/><circle cx="8.5" cy="8.5" r="4.5" fill="none" stroke="#fff" stroke-width="1.6"/><circle cx="8.5" cy="8.5" r="1.8" fill="#fff"/><path d="M3 14 L1 16.5 L5 15.5 Z" fill="#30b040"/></svg>
<svg style="position:absolute;left:257px;top:1057px" width="17" height="16" viewBox="0 0 17 16"><ellipse cx="8.5" cy="8" rx="8" ry="7.5" fill="#f8e090"/><text x="1.5" y="12" font-size="10" font-weight="bold" font-family="Liberation Sans" fill="#e02020">1С</text></svg>
<div style="left:289px;top:1051px;width:159px;height:29px;background:linear-gradient(180deg,rgba(255,255,255,0.38),rgba(255,255,255,0.12) 50%,rgba(255,255,255,0.05));border:1px solid #3a4a5a;border-radius:3px;box-shadow:inset 0 0 0 1px rgba(255,255,255,0.35)"></div>
<div style="left:319px;top:1057.60px;font-size:11.7px;line-height:13.7px;color:#fff;text-shadow:0 0 6px rgba(0,0,0,0.45)">Рекомендации по о...</div>
<svg style="position:absolute;left:300px;top:1057px" width="16" height="16" viewBox="0 0 16 16"><circle cx="8" cy="8" r="7.5" fill="#e03a30"/><path d="M8 8 L1.5 4 A7.5 7.5 0 0 1 14.5 4 Z" fill="#e03a30"/><path d="M8 8 L14.5 4 A7.5 7.5 0 0 1 8 15.5 Z" fill="#f8c820"/><path d="M8 8 L8 15.5 A7.5 7.5 0 0 1 1.5 4 Z" fill="#30a040"/><circle cx="8" cy="8" r="3.6" fill="#3a8ae0" stroke="#fff" stroke-width="1.2"/></svg>
<svg style="position:absolute;left:464px;top:1056px" width="18" height="18" viewBox="0 0 18 18"><circle cx="9" cy="9" r="8" fill="#1a6ac8"/><circle cx="10" cy="7" r="5" fill="#8ad0f8"/><path d="M7 9 Q10 12 13 9" stroke="#0a3a7a" stroke-width="1.2" fill="none"/></svg>
<div style="left:497px;top:1051px;width:159px;height:29px;background:linear-gradient(180deg,rgba(255,255,255,0.38),rgba(255,255,255,0.12) 50%,rgba(255,255,255,0.05));border:1px solid #3a4a5a;border-radius:3px;box-shadow:inset 0 0 0 1px rgba(255,255,255,0.35)"></div>
<div style="left:527px;top:1057.60px;font-size:11.7px;line-height:13.7px;color:#fff;text-shadow:0 0 6px rgba(0,0,0,0.45)">БуланкинСА^ - Tot...</div>
<svg style="position:absolute;left:507px;top:1056px" width="17" height="17" viewBox="0 0 17 17"><rect x="0.5" y="0.5" width="16" height="16" rx="1" fill="#e02040" stroke="#1a2a8a"/><rect x="3" y="1" width="10" height="6" fill="#fff"/><rect x="2" y="10" width="13" height="6" fill="#2a3a9a"/></svg>
<div style="left:660px;top:1051px;width:158px;height:29px;background:linear-gradient(180deg,rgba(255,255,255,0.38),rgba(255,255,255,0.12) 50%,rgba(255,255,255,0.05));border:1px solid #3a4a5a;border-radius:3px;box-shadow:inset 0 0 0 1px rgba(255,255,255,0.35)"></div>
<div style="left:690px;top:1057.60px;font-size:11.7px;line-height:13.7px;color:#fff;text-shadow:0 0 6px rgba(0,0,0,0.45)">УНФ ГрК 2014 / Бул...</div>
<svg style="position:absolute;left:670px;top:1057px" width="16" height="16" viewBox="0 0 16 16"><circle cx="8" cy="8" r="7.5" fill="#f8d030"/><text x="0.5" y="12" font-size="10" font-weight="bold" font-family="Liberation Sans" fill="#d01010">1С</text></svg>
<div style="left:818px;top:1051px;width:160px;height:29px;background:linear-gradient(180deg,rgba(255,255,255,0.62),rgba(255,255,255,0.45) 50%,rgba(255,255,255,0.38));border:1px solid #3a4a5a;border-radius:3px;box-shadow:inset 0 0 0 1px rgba(255,255,255,0.35)"></div>
<div style="left:848px;top:1057.60px;font-size:11.7px;line-height:13.7px;color:#fff;text-shadow:0 0 6px rgba(0,0,0,0.45)">Конфигуратор - Ко...</div>
<svg style="position:absolute;left:829px;top:1058px" width="15" height="15" viewBox="0 0 15 15"><defs><linearGradient id="aib" x1="0" y1="0" x2="0" y2="1"><stop offset="0" stop-color="#fffef4"/><stop offset="0.42" stop-color="#fff6c0"/><stop offset="0.55" stop-color="#c8d830"/><stop offset="1" stop-color="#5a9a10"/></linearGradient></defs><rect x="0.5" y="0.5" width="14" height="14" rx="1.5" fill="#f2c800" stroke="#dca800"/><rect x="1.8" y="1.5" width="11.4" height="11" fill="url(#aib)"/><circle cx="5.5" cy="9.5" r="2.6" fill="#fff030" opacity="0.85"/><circle cx="11" cy="10" r="1.4" fill="#fff030" opacity="0.85"/><path d="M5.5 1 V8" stroke="#40404e" stroke-width="1.8"/><path d="M5.5 8 L2 14 M5.5 8 L10 14" stroke="#607040" stroke-width="0.7"/></svg>
<div style="left:1707px;top:1054.84px;font-size:12px;line-height:14px;color:#fff;">RU</div>
<svg style="position:absolute;left:1737px;top:1061px" width="9" height="6" viewBox="0 0 9 6"><path d="M0.5 5.5 L4.5 1 L8.5 5.5 Z" fill="#fff"/></svg>
<svg style="position:absolute;left:1759px;top:1056px" width="16" height="16" viewBox="0 0 16 16"><path d="M1.5 1 V15" stroke="#fff" stroke-width="1.5"/><path d="M2 1.5 H10 L9 4 H14 L12.5 9 H2 Z" fill="#fff"/></svg>
<svg style="position:absolute;left:1782px;top:1056px" width="17" height="16" viewBox="0 0 17 16"><rect x="4.5" y="4.5" width="11" height="8" fill="#dde6ee" stroke="#fff"/><rect x="1" y="1" width="4" height="6" fill="#fff"/><path d="M7 14.5 H13" stroke="#fff" stroke-width="1.5"/></svg>
<svg style="position:absolute;left:1805px;top:1056px" width="17" height="16" viewBox="0 0 17 16"><path d="M1 5.5 H4 L8 2 V14 L4 10.5 H1 Z" fill="#fff"/><path d="M10.5 5 Q12 8 10.5 11 M13 3.5 Q15.5 8 13 12.5" stroke="#fff" stroke-width="1.2" fill="none"/></svg>
<div style="left:1853px;top:1058.84px;font-size:12px;line-height:14px;color:#fff;">14:43</div>
<div style="left:1905px;top:1050px;width:15px;height:30px;background:linear-gradient(90deg,#6a8098,#a8c0d4 30%,#8aa2ba)"></div>
<div style="left:1905px;top:1050px;width:1px;height:30px;background:#3a4a5a"></div>
<svg style="position:absolute;left:0px;top:0px" width="1920" height="1080" viewBox="0 0 1920 1080"><path d="M260.4 190.4 L261.1 221.5 L258.1 231.9 L258.1 273.3 L259.6 274.8 L263.3 286.7 L272.2 301.5 L287.0 315.6 L295.9 320.7 L306.3 324.4 L313.7 328.1 L321.1 329.6 L352.2 329.6 L356.7 328.1 L373.0 324.4 L381.9 320.7 L389.3 319.3 L396.7 315.6 L405.6 308.9 L410.7 301.5 L414.4 297.0 L420.4 290.4 L427.8 282.2 L435.2 272.6 L438.9 267.4 L442.6 258.5 L444.1 246.7 L447.0 236.3 L449.3 224.4 L453.0 218.5 L456.7 211.1 L456.7 191.1 L459.6 191.6" fill="none" stroke="#ff1010" stroke-width="1.2" stroke-linejoin="round" stroke-linecap="round"/><path d="M545 352 L549 353.5 L555 356 L562 357 L575 357 L577 359 L596 359 L600 360 L606 360 L613 356 L618 355 L624 354 L630 350 L635 346" fill="none" stroke="#ff1010" stroke-width="1.2" stroke-linejoin="round" stroke-linecap="round"/><path d="M543.5 732 L547 733 L552 735 L556 737 L568 737 L572 738 L588 738 L590 739 L643 739 L647 737 L650 735.5" fill="none" stroke="#ff1010" stroke-width="1.2" stroke-linejoin="round" stroke-linecap="round"/><path d="M1753 332 L1756 333 L1759 338 L1763 343.5 L1765 345 L1767 343 L1771 339.5 L1774 336 L1776 333" fill="none" stroke="#ff1010" stroke-width="1.2" stroke-linejoin="round" stroke-linecap="round"/><path d="M1739 711 L1742 711.5 L1747 717 L1752 723 L1754 726 L1759 726 L1762 720 L1765 712 L1766 710" fill="none" stroke="#ff1010" stroke-width="1.2" stroke-linejoin="round" stroke-linecap="round"/></svg>
</body></html>
